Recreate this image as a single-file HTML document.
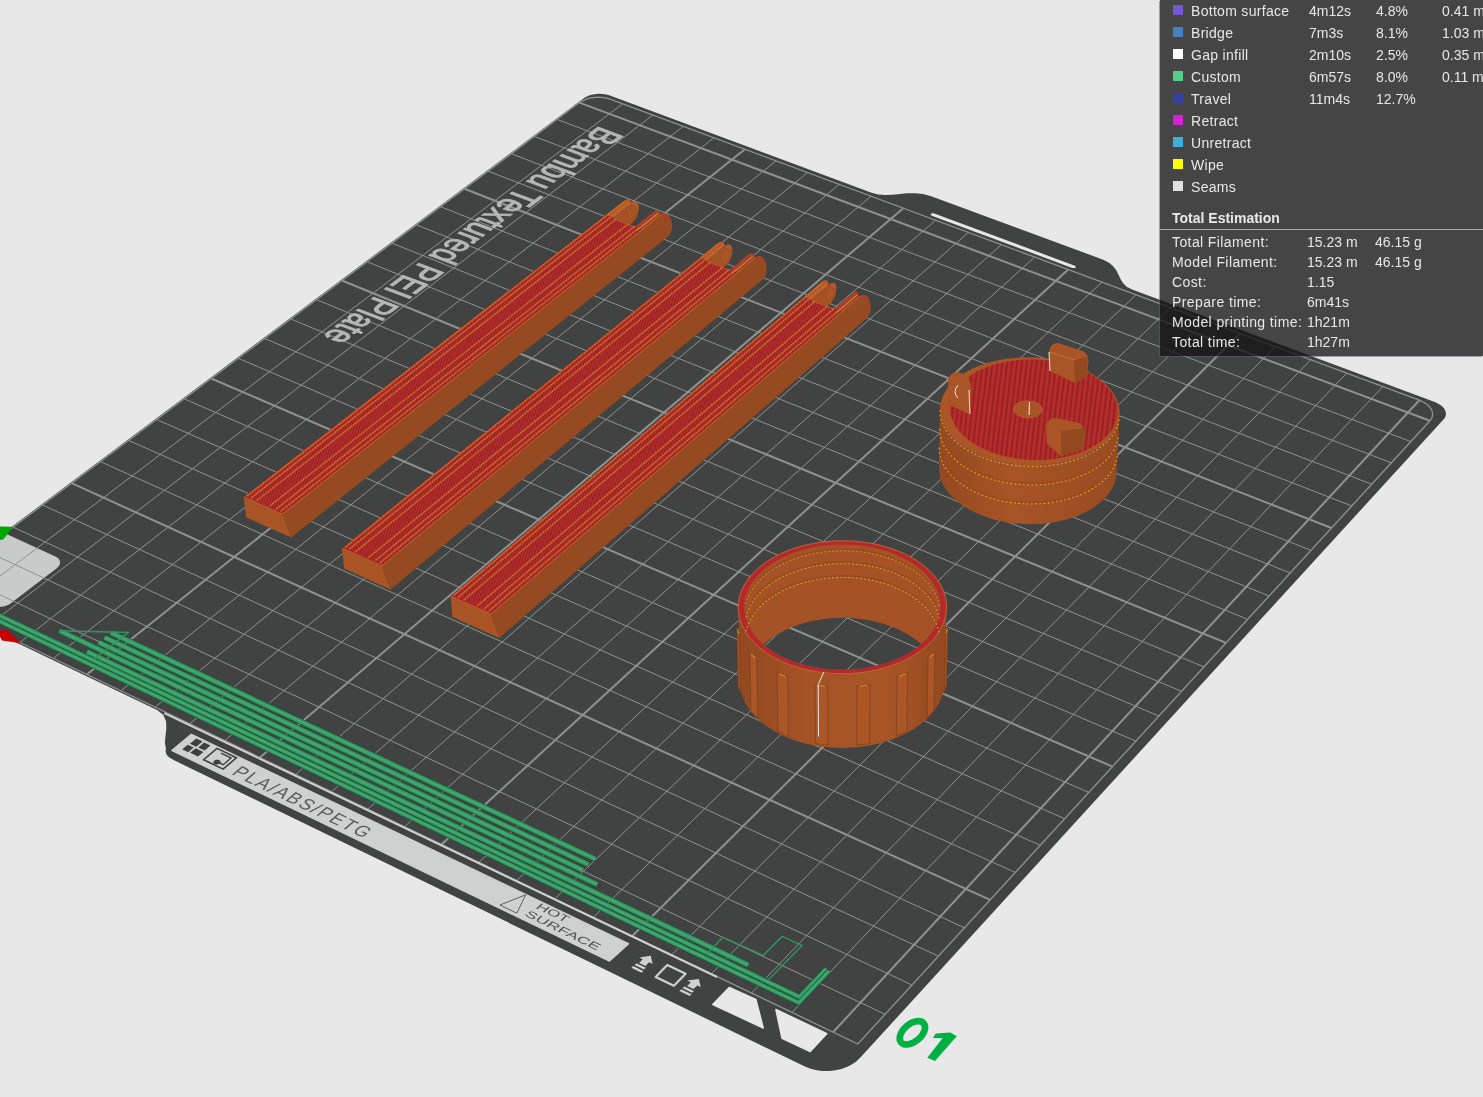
<!DOCTYPE html>
<html><head><meta charset="utf-8"><style>
html,body{margin:0;padding:0;width:1483px;height:1097px;overflow:hidden;background:#e8e8e8;font-family:"Liberation Sans",sans-serif}
svg{position:absolute;left:0;top:0;will-change:transform}
#lg{position:absolute;left:1160px;top:0;width:323px;height:356px;background:rgba(20,20,20,0.77);color:#e8e8e8;font-size:14px;box-shadow:-1px 1px 0 rgba(95,95,115,0.55);will-change:transform}
.row{position:absolute;left:0;height:22px;width:323px;line-height:22px}
.row i{position:absolute;left:13px;top:5px;width:10px;height:10px}
.row span,.row2 span{position:absolute;top:0;white-space:nowrap}
.n{left:31px;letter-spacing:0.3px}.t{left:149px}.p{left:216px}.d{left:282px}
.row2{position:absolute;left:0;height:20px;width:323px;line-height:20px}
.a{left:12px;letter-spacing:0.4px}.b{left:147px}.c{left:215px}
#te{position:absolute;left:12px;top:207px;font-weight:bold;line-height:22px}
#sep{position:absolute;left:0;top:229px;width:323px;height:1px;background:#a8a8a8}
</style></head><body>
<svg width="1483" height="1097" viewBox="0 0 1483 1097"><defs><clipPath id="cl1"><path d="M243.7 497.1 L282.3 514.3 L642.4 229.3 L605.7 215.0 Z"/></clipPath><clipPath id="cl2"><path d="M342.1 548.3 L381.7 566.0 L737.3 272.7 L699.5 258.0 Z"/></clipPath><clipPath id="cl3"><path d="M450.7 596.3 L490.8 614.2 L842.0 311.7 L804.0 296.9 Z"/></clipPath><linearGradient id="rgw" x1="0" x2="1" y1="0" y2="0"><stop offset="0" stop-color="#924820"/><stop offset="0.35" stop-color="#a55326"/><stop offset="0.7" stop-color="#a85526"/><stop offset="1" stop-color="#944920"/></linearGradient><clipPath id="ringclip"><path d="M924.6 640.9 L928.0 637.3 L930.9 633.7 L933.5 629.9 L935.7 626.0 L937.4 622.0 L938.8 618.0 L939.7 613.9 L940.2 609.9 L940.3 605.8 L940.0 601.7 L939.2 597.6 L938.1 593.6 L936.5 589.7 L934.6 585.8 L932.2 582.0 L929.5 578.4 L926.4 574.8 L923.0 571.4 L919.2 568.2 L915.1 565.1 L910.8 562.2 L906.1 559.5 L901.2 557.0 L896.0 554.7 L890.6 552.6 L885.0 550.7 L879.3 549.1 L873.4 547.7 L867.3 546.6 L861.2 545.7 L855.0 545.0 L848.7 544.7 L842.4 544.5 L836.1 544.7 L829.9 545.1 L823.7 545.7 L817.5 546.6 L811.5 547.8 L805.6 549.2 L799.8 550.8 L794.2 552.7 L788.8 554.8 L783.6 557.1 L778.7 559.6 L774.0 562.4 L769.6 565.3 L765.5 568.4 L761.8 571.6 L758.3 575.0 L755.2 578.6 L752.5 582.3 L750.1 586.1 L748.2 589.9 L746.6 593.9 L745.4 597.9 L744.7 602.0 L744.4 606.0 L744.4 610.1 L744.9 614.2 L745.9 618.3 L747.2 622.3 L749.0 626.3 L751.1 630.1 L753.7 633.9 L756.6 637.6 L760.0 641.1 L763.7 644.5 L767.7 647.8 L772.1 650.8 L776.8 653.7 L781.7 656.4 L787.0 658.8 L792.5 661.0 L798.2 663.0 L804.1 664.8 L810.2 666.2 L816.5 667.5 L822.8 668.4 L829.3 669.1 L835.8 669.5 L842.3 669.6 L848.8 669.5 L855.3 669.1 L861.8 668.4 L868.1 667.4 L874.4 666.1 L880.5 664.6 L886.4 662.9 L892.1 660.9 L897.6 658.6 L902.9 656.2 L907.8 653.5 L912.5 650.6 L916.9 647.5 L921.0 644.3 L924.6 640.9 Z"/></clipPath><clipPath id="ringclip2"><path d="M923.4 714.8 L926.7 711.2 L929.6 707.5 L932.2 703.7 L934.3 699.8 L936.0 695.8 L937.4 691.8 L938.3 687.7 L938.8 683.6 L938.9 679.4 L938.6 675.3 L937.8 671.2 L936.7 667.2 L935.2 663.2 L933.2 659.3 L930.9 655.5 L928.3 651.8 L925.2 648.3 L921.8 644.9 L918.1 641.6 L914.1 638.5 L909.8 635.6 L905.2 632.8 L900.3 630.3 L895.2 628.0 L889.9 625.9 L884.4 624.0 L878.8 622.4 L872.9 621.0 L867.0 619.8 L860.9 618.9 L854.8 618.3 L848.7 617.9 L842.5 617.8 L836.3 617.9 L830.1 618.3 L824.0 619.0 L817.9 619.9 L812.0 621.1 L806.1 622.5 L800.5 624.1 L795.0 626.0 L789.6 628.1 L784.5 630.5 L779.7 633.0 L775.1 635.8 L770.7 638.7 L766.7 641.8 L763.0 645.1 L759.6 648.5 L756.5 652.1 L753.9 655.8 L751.5 659.6 L749.6 663.5 L748.1 667.5 L746.9 671.6 L746.2 675.6 L745.9 679.8 L745.9 683.9 L746.4 688.0 L747.3 692.1 L748.7 696.1 L750.4 700.1 L752.5 704.0 L755.1 707.8 L758.0 711.5 L761.3 715.1 L764.9 718.5 L768.9 721.8 L773.2 724.9 L777.8 727.7 L782.7 730.4 L787.9 732.9 L793.3 735.1 L798.9 737.1 L804.8 738.9 L810.8 740.4 L816.9 741.6 L823.2 742.6 L829.5 743.2 L835.9 743.6 L842.3 743.8 L848.8 743.6 L855.2 743.2 L861.5 742.5 L867.8 741.5 L873.9 740.2 L879.9 738.7 L885.8 737.0 L891.4 734.9 L896.8 732.7 L902.0 730.2 L906.9 727.5 L911.5 724.6 L915.8 721.5 L919.8 718.2 L923.4 714.8 Z"/></clipPath><linearGradient id="cgw" x1="0" x2="1" y1="0" y2="0"><stop offset="0" stop-color="#944920"/><stop offset="0.4" stop-color="#a75426"/><stop offset="1" stop-color="#984b22"/></linearGradient><clipPath id="cl4"><path d="M1105.7 437.0 L1108.4 434.2 L1110.8 431.2 L1112.8 428.2 L1114.5 425.1 L1115.8 421.9 L1116.7 418.7 L1117.3 415.4 L1117.6 412.2 L1117.5 408.9 L1117.0 405.6 L1116.2 402.3 L1115.0 399.1 L1113.5 395.9 L1111.7 392.8 L1109.5 389.8 L1107.0 386.8 L1104.2 384.0 L1101.1 381.2 L1097.7 378.6 L1094.1 376.1 L1090.2 373.8 L1086.1 371.6 L1081.7 369.5 L1077.2 367.7 L1072.5 366.0 L1067.6 364.5 L1062.6 363.2 L1057.5 362.1 L1052.2 361.1 L1046.9 360.4 L1041.6 359.9 L1036.2 359.6 L1030.8 359.5 L1025.4 359.6 L1020.1 359.9 L1014.8 360.4 L1009.6 361.2 L1004.5 362.1 L999.5 363.2 L994.6 364.5 L989.9 366.0 L985.4 367.7 L981.1 369.6 L977.0 371.6 L973.2 373.8 L969.6 376.2 L966.2 378.7 L963.2 381.3 L960.4 384.0 L957.9 386.9 L955.8 389.9 L954.0 392.9 L952.5 396.0 L951.4 399.2 L950.6 402.4 L950.2 405.7 L950.1 409.0 L950.4 412.3 L951.0 415.6 L952.0 418.8 L953.4 422.0 L955.1 425.2 L957.2 428.3 L959.6 431.4 L962.3 434.3 L965.3 437.1 L968.6 439.9 L972.2 442.5 L976.1 444.9 L980.3 447.2 L984.7 449.3 L989.3 451.3 L994.1 453.1 L999.0 454.7 L1004.2 456.1 L1009.4 457.3 L1014.8 458.2 L1020.3 459.0 L1025.8 459.6 L1031.4 459.9 L1036.9 460.0 L1042.5 459.9 L1048.0 459.5 L1053.5 459.0 L1058.8 458.2 L1064.1 457.2 L1069.2 456.0 L1074.2 454.6 L1078.9 453.0 L1083.5 451.2 L1087.9 449.3 L1092.0 447.1 L1095.9 444.8 L1099.5 442.4 L1102.7 439.8 L1105.7 437.0 Z"/></clipPath></defs><path d="M-174.3 666.2 L-80.7 596.1 L157.1 710.1 L163.4 715.1 L166.1 721.4 L166.3 728.4 L165.5 735.7 L164.9 742.5 L165.9 748.2 L165.6 751.9 L166.8 755.0 L169.4 757.6 L173.7 760.1 L804.4 1066.3 L809.8 1068.5 L815.7 1070.0 L821.9 1070.9 L828.2 1071.1 L834.4 1070.5 L840.5 1069.3 L846.2 1067.3 L851.4 1064.8 L856.0 1061.7 L859.9 1058.1 L1443.7 419.2 L1445.0 417.5 L1445.7 415.7 L1446.0 413.8 L1445.7 411.9 L1445.0 409.9 L1443.8 408.1 L1442.1 406.3 L1440.0 404.7 L1437.5 403.3 L1434.8 402.1 L1132.1 289.6 L1126.7 286.8 L1123.1 283.2 L1120.6 279.2 L1118.6 274.9 L1116.4 270.6 L1113.4 266.5 L1109.1 262.7 L1102.7 259.5 L931.2 196.2 L931.2 196.2 L922.9 194.0 L914.9 193.2 L907.2 193.3 L899.7 194.0 L892.4 194.7 L885.2 194.9 L878.1 194.4 L870.9 192.5 L609.9 95.5 L607.4 94.7 L604.7 94.2 L601.9 93.9 L599.0 93.8 L596.1 94.0 L593.2 94.4 L590.5 95.1 L588.0 95.9 L585.8 97.0 L583.8 98.2 Z" fill="#414342"/>
<path d="M-174.3 666.2 L-79.1 594.9 L158.6 708.9" fill="none" stroke="#2c2e2d" stroke-width="1" opacity="0.6"/>
<path d="M56.7 568.2 L58.7 566.3 L59.8 564.2 L60.1 562.0 L59.5 560.0 L58.1 558.2 L55.9 556.8 L-4.7 528.7 L-9.0 527.5 L-14.1 527.5 L-19.1 528.7 L-23.2 530.9 L-69.1 565.0 L-71.8 568.0 L-72.8 571.2 L-71.6 574.2 L-68.7 576.4 L-7.8 605.4 L-4.9 606.4 L-1.6 606.8 L1.9 606.7 L5.3 606.0 L8.5 604.7 L11.2 603.1 Z" fill="#c9cbca"/>
<path d="M1072.3 267.9 L1073.5 268.1 L1074.7 268.0 L1075.6 267.5 L1075.9 266.9 L1075.6 266.2 L1074.8 265.7 L934.3 213.5 L933.1 213.3 L931.9 213.4 L931.1 213.8 L930.7 214.5 L930.9 215.1 L931.8 215.7 Z" fill="#e6e7e6"/>
<path d="M729.2 987.5 L755.9 999.5 L763.2 1028.0 L712.8 1004.5 Z M775.9 1009.5 L826.9 1033.6 L810.2 1051.6 L782.0 1038.3 Z" fill="#e8e8e8" stroke="#e8e8e8" stroke-width="1.5" stroke-linejoin="round"/>
<path d="M191.2 734.0 L629.1 943.7 L609.5 961.4 L171.4 750.5 Z" fill="#cfd1d0" stroke="#cfd1d0" stroke-width="1" stroke-linejoin="round"/>
<path d="M-45.8 610.9 L622.7 103.7 M-47.4 572.3 L885.1 1014.3 M-13.0 626.6 L652.9 115.0 M-17.0 549.5 L912.0 985.0 M20.0 642.4 L683.3 126.3 M13.0 527.1 L938.4 956.2 M53.3 658.4 L714.0 137.7 M42.5 505.0 L964.5 927.8 M120.9 690.8 L776.1 160.8 M100.3 461.6 L1015.3 872.4 M155.1 707.2 L807.5 172.5 M128.6 440.4 L1040.2 845.3 M189.7 723.8 L839.2 184.3 M156.6 419.5 L1064.7 818.7 M224.7 740.6 L871.1 196.2 M184.1 398.8 L1088.7 792.4 M295.6 774.5 L935.7 220.2 M238.1 358.3 L1135.9 741.1 M331.5 791.8 L968.5 232.4 M264.6 338.5 L1158.9 716.0 M367.8 809.2 L1001.4 244.7 M290.7 318.9 L1181.6 691.3 M404.5 826.8 L1034.7 257.1 M316.5 299.6 L1203.9 666.9 M478.9 862.4 L1102.0 282.1 M367.1 261.7 L1247.7 619.3 M516.7 880.5 L1136.1 294.8 M391.9 243.1 L1269.1 596.0 M554.8 898.8 L1170.4 307.6 M416.4 224.8 L1290.2 573.0 M593.4 917.3 L1205.1 320.5 M440.5 206.7 L1311.0 550.3 M671.6 954.8 L1275.3 346.6 M488.0 171.1 L1351.8 505.9 M711.3 973.9 L1310.8 359.8 M511.2 153.7 L1371.7 484.2 M751.5 993.1 L1346.7 373.2 M534.2 136.4 L1391.4 462.8 M792.0 1012.5 L1382.8 386.6 M557.0 119.4 L1410.8 441.6" fill="none" stroke="#8e938f" stroke-width="1.0"/><path d="M86.9 674.5 L744.9 149.2 M71.6 483.2 L990.1 899.9 M260.0 757.5 L903.3 208.2 M211.3 378.5 L1112.5 766.6 M441.5 844.5 L1068.2 269.5 M342.0 280.5 L1226.0 642.9 M632.3 936.0 L1240.0 333.5 M464.4 188.8 L1331.5 528.0 M833.0 1032.2 L1419.3 400.2 M579.4 102.6 L1429.9 420.8" fill="none" stroke="#8e938f" stroke-width="2"/><path d="M-173.3 666.7 L-78.2 595.4 L857.8 1044.0 L1429.9 420.8 L1431.7 418.2 L1432.6 415.4 L1432.5 412.5 L1431.5 409.6 L1429.6 406.8 L1426.8 404.2 L1423.3 402.0 L1419.3 400.2 L610.7 99.3 L606.9 98.2 L602.8 97.5 L598.4 97.2 L594.1 97.5 L589.8 98.2 L585.9 99.3 L582.3 100.8 L579.4 102.6 L-173.3 666.7" fill="none" stroke="#8e938f" stroke-width="1.3"/>
<path d="M164.3 713.2 L717.1 977.0" fill="none" stroke="#cdd0cf" stroke-width="2.0"/>
<text transform="matrix(-2.2353 1.6987 -3.0233 -1.1369 599.97 125.44)" font-family='"Liberation Sans",sans-serif' font-size="12.00" font-weight="normal" fill="#b5b7b6" textLength="124.5" lengthAdjust="spacingAndGlyphs" text-anchor="start" stroke="#b5b7b6" stroke-width="0.35">Bambu Textured PEI Plate</text>
<text transform="matrix(3.5471 1.7152 -3.0342 2.5842 230.65 773.94)" font-family='"Liberation Sans",sans-serif' font-size="4.80" font-weight="normal" fill="#5a5c5b" textLength="38.0" lengthAdjust="spacingAndGlyphs" text-anchor="start" letter-spacing="0.5">PLA/ABS/PETG</text>
<text transform="matrix(3.8341 1.8474 -2.9100 2.7871 534.90 908.02)" font-family='"Liberation Sans",sans-serif' font-size="2.70" font-weight="normal" fill="#505251" textLength="8.0" lengthAdjust="spacingAndGlyphs" text-anchor="start" >HOT</text>
<text transform="matrix(3.8364 1.8549 -2.9247 2.7985 523.85 915.29)" font-family='"Liberation Sans",sans-serif' font-size="2.70" font-weight="normal" fill="#505251" textLength="19.0" lengthAdjust="spacingAndGlyphs" text-anchor="start" >SURFACE</text>
<path d="M189.9 743.8 L196.2 746.8 L202.6 741.5 L196.3 738.5 Z" fill="#3e403f"/>
<path d="M198.3 747.4 L204.6 750.5 L210.4 745.6 L204.1 742.6 Z" fill="#3e403f"/>
<path d="M182.2 749.3 L188.2 752.2 L193.7 747.6 L187.7 744.7 Z" fill="#3e403f"/>
<path d="M190.2 752.8 L198.0 756.5 L203.4 751.9 L195.7 748.2 Z" fill="#3e403f"/>
<path d="M203.6 759.7 L223.1 769.1 L236.4 757.8 L217.0 748.4 Z" fill="none" stroke="#3e403f" stroke-width="1.6"/>
<path d="M220.9 753.1 L231.1 758.0 L223.2 764.7 L218.6 762.5" fill="none" stroke="#3e403f" stroke-width="1.4"/>
<path d="M219.7 763.4 L220.6 761.9 L220.1 760.5 L218.3 759.7 L216.0 759.7 L214.1 760.7 L213.2 762.1 L213.7 763.6 L215.5 764.4 L217.8 764.4 L219.7 763.4 Z" fill="#3e403f"/>
<path d="M525.7 894.8 L516.8 913.2 L500.0 905.0 Z" fill="none" stroke="#505251" stroke-width="0.9"/>
<path d="M650.8 955.8 L652.7 963.9 L649.1 962.2 L645.4 965.9 L639.1 962.9 L642.8 959.2 L639.2 957.4 Z" fill="#cfd1d0"/>
<path d="M636.3 963.3 L645.8 967.8 L644.1 969.6 L634.6 965.0 Z" fill="#cfd1d0"/>
<path d="M633.1 966.0 L643.3 970.9 L641.6 972.7 L631.3 967.7 Z" fill="#cfd1d0"/>
<path d="M698.8 978.9 L700.8 987.1 L697.2 985.4 L693.5 989.1 L687.1 986.1 L690.8 982.3 L687.2 980.5 Z" fill="#cfd1d0"/>
<path d="M684.3 986.4 L693.9 991.1 L692.2 992.8 L682.6 988.2 Z" fill="#cfd1d0"/>
<path d="M681.1 989.2 L691.5 994.2 L689.8 995.9 L679.4 990.9 Z" fill="#cfd1d0"/>
<path d="M655.6 976.9 L673.9 985.7 L685.6 973.8 L667.3 965.0 Z" fill="none" stroke="#cfd1d0" stroke-width="2.2" stroke-linejoin="round"/>
<path d="M110.9 632.8 L595.2 859.0" fill="none" stroke="#1d4a32" stroke-width="6.0" stroke-linecap="butt" stroke-linejoin="miter"/><path d="M110.9 632.8 L595.2 859.0" fill="none" stroke="#33935f" stroke-width="5.0" stroke-linecap="butt" stroke-linejoin="miter"/><path d="M110.9 632.8 L595.2 859.0" fill="none" stroke="#40a86f" stroke-width="2.2" stroke-linecap="butt"/><path d="M104.7 637.5 L588.3 864.5" fill="none" stroke="#1d4a32" stroke-width="6.0" stroke-linecap="butt" stroke-linejoin="miter"/><path d="M104.7 637.5 L588.3 864.5" fill="none" stroke="#33935f" stroke-width="5.0" stroke-linecap="butt" stroke-linejoin="miter"/><path d="M104.7 637.5 L588.3 864.5" fill="none" stroke="#40a86f" stroke-width="2.2" stroke-linecap="butt"/><path d="M98.7 642.3 L582.9 870.3" fill="none" stroke="#1d4a32" stroke-width="6.0" stroke-linecap="butt" stroke-linejoin="miter"/><path d="M98.7 642.3 L582.9 870.3" fill="none" stroke="#33935f" stroke-width="5.0" stroke-linecap="butt" stroke-linejoin="miter"/><path d="M98.7 642.3 L582.9 870.3" fill="none" stroke="#40a86f" stroke-width="2.2" stroke-linecap="butt"/><path d="M59.5 630.8 L597.2 884.6" fill="none" stroke="#1d4a32" stroke-width="6.0" stroke-linecap="butt" stroke-linejoin="miter"/><path d="M59.5 630.8 L597.2 884.6" fill="none" stroke="#33935f" stroke-width="5.0" stroke-linecap="butt" stroke-linejoin="miter"/><path d="M59.5 630.8 L597.2 884.6" fill="none" stroke="#40a86f" stroke-width="2.2" stroke-linecap="butt"/><path d="M87.0 651.7 L748.2 964.9" fill="none" stroke="#1d4a32" stroke-width="6.0" stroke-linecap="butt" stroke-linejoin="miter"/><path d="M87.0 651.7 L748.2 964.9" fill="none" stroke="#33935f" stroke-width="5.0" stroke-linecap="butt" stroke-linejoin="miter"/><path d="M87.0 651.7 L748.2 964.9" fill="none" stroke="#40a86f" stroke-width="2.2" stroke-linecap="butt"/><path d="M-96.5 569.8 L799.6 997.0 L826.3 968.8" fill="none" stroke="#1d4a32" stroke-width="5.4" stroke-linecap="butt" stroke-linejoin="miter"/><path d="M-96.5 569.8 L799.6 997.0 L826.3 968.8" fill="none" stroke="#33935f" stroke-width="4.4" stroke-linecap="butt" stroke-linejoin="miter"/><path d="M-96.5 569.8 L799.6 997.0 L826.3 968.8" fill="none" stroke="#40a86f" stroke-width="2.0" stroke-linecap="butt"/><path d="M-101.0 573.1 L798.9 1002.8 L829.0 970.9" fill="none" stroke="#1d4a32" stroke-width="5.2" stroke-linecap="butt" stroke-linejoin="miter"/><path d="M-101.0 573.1 L798.9 1002.8 L829.0 970.9" fill="none" stroke="#33935f" stroke-width="4.2" stroke-linecap="butt" stroke-linejoin="miter"/><path d="M-101.0 573.1 L798.9 1002.8 L829.0 970.9" fill="none" stroke="#40a86f" stroke-width="1.9" stroke-linecap="butt"/><path d="M59.5 630.8 L128.3 632.5 L94.0 659.0" fill="none" stroke="#33935f" stroke-width="1.4"/><path d="M707.4 953.4 L722.7 937.3 L763.3 955.3 L782.1 936.4 L802.0 945.4 L768.0 980.2" fill="none" stroke="#33935f" stroke-width="1.4"/>
<path d="M0 526.5 L13.2 526.8 L3.5 539.2 L0 540 Z" fill="#00a800"/>
<path d="M0 630.5 L7 629.8 L20.8 643.3 L2.2 640.6 L0 637 Z" fill="#c80000"/>
<path d="M613.8 237.3 L632.3 222.7 L632.3 222.7 L633.5 221.6 L634.7 220.3 L635.7 218.7 L636.7 217.0 L637.5 215.1 L638.1 213.2 L638.6 211.2 L638.8 209.4 L638.8 207.6 L638.7 206.0 L638.3 204.6 L637.7 203.5 L637.0 202.6 L636.1 202.1 L635.1 201.9 L633.9 202.0 L632.7 202.5 L631.5 203.3 L612.9 217.8 Z" fill="#a45225"/><path d="M634.3 211.2 L634.0 210.1 L633.4 209.4 L632.6 209.4 L631.6 210.0 L630.7 211.2 L630.0 212.6 L629.7 214.1 L629.8 215.5 L630.2 216.4 L630.9 216.8 L631.9 216.5 L632.8 215.6 L633.6 214.2 L634.1 212.7 L634.3 211.2 Z" fill="none" stroke="#c06a30" stroke-width="0.9" opacity="0.8"/><path d="M605.7 215.0 L612.9 217.8 L631.5 203.3 L633.3 202.2 L635.1 201.9 L636.6 202.3 L637.7 203.5 L638.5 205.3 L638.8 207.6 L631.6 204.8 L631.3 202.5 L630.5 200.7 L629.3 199.5 L627.8 199.1 L626.1 199.4 L624.3 200.5 Z" fill="#b5582a"/><path d="M243.7 497.1 L282.3 514.3 L642.4 229.3 L605.7 215.0 Z" fill="#b52d2d"/><g clip-path="url(#cl1)"><path d="M150.8 213.0L59.8 516.3M153.4 213.0L62.4 516.3M156.0 213.0L65.0 516.3M158.6 213.0L67.6 516.3M161.2 213.0L70.2 516.3M163.8 213.0L72.8 516.3M166.4 213.0L75.4 516.3M169.0 213.0L78.0 516.3M171.6 213.0L80.6 516.3M174.2 213.0L83.2 516.3M176.8 213.0L85.8 516.3M179.4 213.0L88.4 516.3M182.0 213.0L91.0 516.3M184.6 213.0L93.6 516.3M187.2 213.0L96.2 516.3M189.8 213.0L98.8 516.3M192.4 213.0L101.4 516.3M195.0 213.0L104.0 516.3M197.6 213.0L106.6 516.3M200.2 213.0L109.2 516.3M202.8 213.0L111.8 516.3M205.4 213.0L114.4 516.3M208.0 213.0L117.0 516.3M210.6 213.0L119.6 516.3M213.2 213.0L122.2 516.3M215.8 213.0L124.8 516.3M218.4 213.0L127.4 516.3M221.0 213.0L130.0 516.3M223.6 213.0L132.6 516.3M226.2 213.0L135.2 516.3M228.8 213.0L137.8 516.3M231.4 213.0L140.4 516.3M234.0 213.0L143.0 516.3M236.6 213.0L145.6 516.3M239.2 213.0L148.2 516.3M241.8 213.0L150.8 516.3M244.4 213.0L153.4 516.3M247.0 213.0L156.0 516.3M249.6 213.0L158.6 516.3M252.2 213.0L161.2 516.3M254.8 213.0L163.8 516.3M257.4 213.0L166.4 516.3M260.0 213.0L169.0 516.3M262.6 213.0L171.6 516.3M265.2 213.0L174.2 516.3M267.8 213.0L176.8 516.3M270.4 213.0L179.4 516.3M273.0 213.0L182.0 516.3M275.6 213.0L184.6 516.3M278.2 213.0L187.2 516.3M280.8 213.0L189.8 516.3M283.4 213.0L192.4 516.3M286.0 213.0L195.0 516.3M288.6 213.0L197.6 516.3M291.2 213.0L200.2 516.3M293.8 213.0L202.8 516.3M296.4 213.0L205.4 516.3M299.0 213.0L208.0 516.3M301.6 213.0L210.6 516.3M304.2 213.0L213.2 516.3M306.8 213.0L215.8 516.3M309.4 213.0L218.4 516.3M312.0 213.0L221.0 516.3M314.6 213.0L223.6 516.3M317.2 213.0L226.2 516.3M319.8 213.0L228.8 516.3M322.4 213.0L231.4 516.3M325.0 213.0L234.0 516.3M327.6 213.0L236.6 516.3M330.2 213.0L239.2 516.3M332.8 213.0L241.8 516.3M335.4 213.0L244.4 516.3M338.0 213.0L247.0 516.3M340.6 213.0L249.6 516.3M343.2 213.0L252.2 516.3M345.8 213.0L254.8 516.3M348.4 213.0L257.4 516.3M351.0 213.0L260.0 516.3M353.6 213.0L262.6 516.3M356.2 213.0L265.2 516.3M358.8 213.0L267.8 516.3M361.4 213.0L270.4 516.3M364.0 213.0L273.0 516.3M366.6 213.0L275.6 516.3M369.2 213.0L278.2 516.3M371.8 213.0L280.8 516.3M374.4 213.0L283.4 516.3M377.0 213.0L286.0 516.3M379.6 213.0L288.6 516.3M382.2 213.0L291.2 516.3M384.8 213.0L293.8 516.3M387.4 213.0L296.4 516.3M390.0 213.0L299.0 516.3M392.6 213.0L301.6 516.3M395.2 213.0L304.2 516.3M397.8 213.0L306.8 516.3M400.4 213.0L309.4 516.3M403.0 213.0L312.0 516.3M405.6 213.0L314.6 516.3M408.2 213.0L317.2 516.3M410.8 213.0L319.8 516.3M413.4 213.0L322.4 516.3M416.0 213.0L325.0 516.3M418.6 213.0L327.6 516.3M421.2 213.0L330.2 516.3M423.8 213.0L332.8 516.3M426.4 213.0L335.4 516.3M429.0 213.0L338.0 516.3M431.6 213.0L340.6 516.3M434.2 213.0L343.2 516.3M436.8 213.0L345.8 516.3M439.4 213.0L348.4 516.3M442.0 213.0L351.0 516.3M444.6 213.0L353.6 516.3M447.2 213.0L356.2 516.3M449.8 213.0L358.8 516.3M452.4 213.0L361.4 516.3M455.0 213.0L364.0 516.3M457.6 213.0L366.6 516.3M460.2 213.0L369.2 516.3M462.8 213.0L371.8 516.3M465.4 213.0L374.4 516.3M468.0 213.0L377.0 516.3M470.6 213.0L379.6 516.3M473.2 213.0L382.2 516.3M475.8 213.0L384.8 516.3M478.4 213.0L387.4 516.3M481.0 213.0L390.0 516.3M483.6 213.0L392.6 516.3M486.2 213.0L395.2 516.3M488.8 213.0L397.8 516.3M491.4 213.0L400.4 516.3M494.0 213.0L403.0 516.3M496.6 213.0L405.6 516.3M499.2 213.0L408.2 516.3M501.8 213.0L410.8 516.3M504.4 213.0L413.4 516.3M507.0 213.0L416.0 516.3M509.6 213.0L418.6 516.3M512.2 213.0L421.2 516.3M514.8 213.0L423.8 516.3M517.4 213.0L426.4 516.3M520.0 213.0L429.0 516.3M522.6 213.0L431.6 516.3M525.2 213.0L434.2 516.3M527.8 213.0L436.8 516.3M530.4 213.0L439.4 516.3M533.0 213.0L442.0 516.3M535.6 213.0L444.6 516.3M538.2 213.0L447.2 516.3M540.8 213.0L449.8 516.3M543.4 213.0L452.4 516.3M546.0 213.0L455.0 516.3M548.6 213.0L457.6 516.3M551.2 213.0L460.2 516.3M553.8 213.0L462.8 516.3M556.4 213.0L465.4 516.3M559.0 213.0L468.0 516.3M561.6 213.0L470.6 516.3M564.2 213.0L473.2 516.3M566.8 213.0L475.8 516.3M569.4 213.0L478.4 516.3M572.0 213.0L481.0 516.3M574.6 213.0L483.6 516.3M577.2 213.0L486.2 516.3M579.8 213.0L488.8 516.3M582.4 213.0L491.4 516.3M585.0 213.0L494.0 516.3M587.6 213.0L496.6 516.3M590.2 213.0L499.2 516.3M592.8 213.0L501.8 516.3M595.4 213.0L504.4 516.3M598.0 213.0L507.0 516.3M600.6 213.0L509.6 516.3M603.2 213.0L512.2 516.3M605.8 213.0L514.8 516.3M608.4 213.0L517.4 516.3M611.0 213.0L520.0 516.3M613.6 213.0L522.6 516.3M616.2 213.0L525.2 516.3M618.8 213.0L527.8 516.3M621.4 213.0L530.4 516.3M624.0 213.0L533.0 516.3M626.6 213.0L535.6 516.3M629.2 213.0L538.2 516.3M631.8 213.0L540.8 516.3M634.4 213.0L543.4 516.3M637.0 213.0L546.0 516.3M639.6 213.0L548.6 516.3M642.2 213.0L551.2 516.3M644.8 213.0L553.8 516.3M647.4 213.0L556.4 516.3M650.0 213.0L559.0 516.3M652.6 213.0L561.6 516.3M655.2 213.0L564.2 516.3M657.8 213.0L566.8 516.3M660.4 213.0L569.4 516.3M663.0 213.0L572.0 516.3M665.6 213.0L574.6 516.3M668.2 213.0L577.2 516.3M670.8 213.0L579.8 516.3M673.4 213.0L582.4 516.3M676.0 213.0L585.0 516.3M678.6 213.0L587.6 516.3M681.2 213.0L590.2 516.3M683.8 213.0L592.8 516.3M686.4 213.0L595.4 516.3M689.0 213.0L598.0 516.3M691.6 213.0L600.6 516.3M694.2 213.0L603.2 516.3M696.8 213.0L605.8 516.3M699.4 213.0L608.4 516.3M702.0 213.0L611.0 516.3M704.6 213.0L613.6 516.3M707.2 213.0L616.2 516.3M709.8 213.0L618.8 516.3M712.4 213.0L621.4 516.3M715.0 213.0L624.0 516.3M717.6 213.0L626.6 516.3M720.2 213.0L629.2 516.3M722.8 213.0L631.8 516.3M725.4 213.0L634.4 516.3M728.0 213.0L637.0 516.3M730.6 213.0L639.6 516.3M733.2 213.0L642.2 516.3" fill="none" stroke="#761819" stroke-width="0.90" opacity="0.60"/></g><path d="M246.3 496.6 L625.4 200.9 M250.5 498.4 L629.4 202.5 M256.3 501.0 L616.3 219.1 M269.0 506.6 L628.4 223.8 M275.5 509.6 L634.7 226.3 M280.2 511.6 L657.6 213.3" fill="none" stroke="#d8772e" stroke-width="1.3" opacity="0.95"/><path d="M246.3 496.6 L625.4 200.9 M250.5 498.4 L629.4 202.5 M256.3 501.0 L616.3 219.1 M269.0 506.6 L628.4 223.8 M275.5 509.6 L634.7 226.3 M280.2 511.6 L657.6 213.3" fill="none" stroke="#3a1208" stroke-width="1.0" opacity="0.5" stroke-dasharray="1 2.2"/><path d="M243.7 497.1 L282.3 514.3" fill="none" stroke="#d07030" stroke-width="1.0"/><path d="M635.1 227.1 L634.0 226.7 L631.0 225.5 L626.5 223.7 L621.6 221.8 L617.1 220.1 L614.1 218.9 L613.0 218.5" fill="none" stroke="#d08040" stroke-width="0.8" opacity="0.7"/><path d="M291.2 537.5 L668.0 236.5 L668.0 236.5 L669.1 235.4 L670.1 234.0 L670.9 232.3 L671.6 230.4 L672.0 228.4 L672.2 226.3 L672.1 224.2 L671.9 222.1 L671.4 220.1 L670.6 218.3 L669.7 216.7 L668.7 215.4 L667.5 214.4 L666.2 213.7 L664.9 213.4 L663.5 213.4 L662.2 213.8 L661.0 214.6 L282.3 514.3 Z" fill="#964a22"/><path d="M635.1 226.4 L642.4 229.3 L661.0 214.6 L662.9 213.6 L664.9 213.4 L666.9 214.0 L668.7 215.4 L670.2 217.5 L671.4 220.1 L660.9 216.1 L660.6 213.8 L659.8 212.0 L658.7 210.8 L657.2 210.4 L655.5 210.7 L653.7 211.8 Z" fill="#a8402a"/><path d="M637.2 230.0 L658.1 213.5" fill="none" stroke="#d8c030" stroke-width="1" opacity="0.8"/><path d="M282.3 514.3 L661.0 214.6" fill="none" stroke="#d07030" stroke-width="0.9" opacity="0.9"/><path d="M246.2 517.4 L291.2 537.5 L282.3 514.3 L243.7 497.1 Z" fill="#a85425"/>
<path d="M707.5 280.5 L725.8 265.5 L725.8 265.5 L727.0 264.4 L728.1 263.0 L729.2 261.4 L730.1 259.6 L731.0 257.7 L731.6 255.8 L732.1 253.8 L732.4 251.9 L732.4 250.2 L732.3 248.5 L731.9 247.2 L731.4 246.0 L730.7 245.2 L729.8 244.7 L728.8 244.5 L727.7 244.6 L726.6 245.1 L725.4 246.0 L707.0 260.9 Z" fill="#a45225"/><path d="M727.9 253.9 L727.7 252.7 L727.1 252.1 L726.3 252.1 L725.3 252.7 L724.5 253.9 L723.8 255.4 L723.4 256.9 L723.4 258.3 L723.9 259.2 L724.6 259.5 L725.5 259.2 L726.4 258.3 L727.2 256.9 L727.8 255.4 L727.9 253.9 Z" fill="none" stroke="#c06a30" stroke-width="0.9" opacity="0.8"/><path d="M699.5 258.0 L707.0 260.9 L725.4 246.0 L727.2 244.8 L728.8 244.5 L730.3 244.9 L731.4 246.0 L732.1 247.8 L732.4 250.2 L725.0 247.3 L724.7 245.0 L724.0 243.2 L722.9 242.0 L721.4 241.6 L719.7 242.0 L717.9 243.1 Z" fill="#b5582a"/><path d="M342.1 548.3 L381.7 566.0 L737.3 272.7 L699.5 258.0 Z" fill="#b52d2d"/><g clip-path="url(#cl2)"><path d="M246.5 256.0L152.9 568.0M249.1 256.0L155.5 568.0M251.7 256.0L158.1 568.0M254.3 256.0L160.7 568.0M256.9 256.0L163.3 568.0M259.5 256.0L165.9 568.0M262.1 256.0L168.5 568.0M264.7 256.0L171.1 568.0M267.3 256.0L173.7 568.0M269.9 256.0L176.3 568.0M272.5 256.0L178.9 568.0M275.1 256.0L181.5 568.0M277.7 256.0L184.1 568.0M280.3 256.0L186.7 568.0M282.9 256.0L189.3 568.0M285.5 256.0L191.9 568.0M288.1 256.0L194.5 568.0M290.7 256.0L197.1 568.0M293.3 256.0L199.7 568.0M295.9 256.0L202.3 568.0M298.5 256.0L204.9 568.0M301.1 256.0L207.5 568.0M303.7 256.0L210.1 568.0M306.3 256.0L212.7 568.0M308.9 256.0L215.3 568.0M311.5 256.0L217.9 568.0M314.1 256.0L220.5 568.0M316.7 256.0L223.1 568.0M319.3 256.0L225.7 568.0M321.9 256.0L228.3 568.0M324.5 256.0L230.9 568.0M327.1 256.0L233.5 568.0M329.7 256.0L236.1 568.0M332.3 256.0L238.7 568.0M334.9 256.0L241.3 568.0M337.5 256.0L243.9 568.0M340.1 256.0L246.5 568.0M342.7 256.0L249.1 568.0M345.3 256.0L251.7 568.0M347.9 256.0L254.3 568.0M350.5 256.0L256.9 568.0M353.1 256.0L259.5 568.0M355.7 256.0L262.1 568.0M358.3 256.0L264.7 568.0M360.9 256.0L267.3 568.0M363.5 256.0L269.9 568.0M366.1 256.0L272.5 568.0M368.7 256.0L275.1 568.0M371.3 256.0L277.7 568.0M373.9 256.0L280.3 568.0M376.5 256.0L282.9 568.0M379.1 256.0L285.5 568.0M381.7 256.0L288.1 568.0M384.3 256.0L290.7 568.0M386.9 256.0L293.3 568.0M389.5 256.0L295.9 568.0M392.1 256.0L298.5 568.0M394.7 256.0L301.1 568.0M397.3 256.0L303.7 568.0M399.9 256.0L306.3 568.0M402.5 256.0L308.9 568.0M405.1 256.0L311.5 568.0M407.7 256.0L314.1 568.0M410.3 256.0L316.7 568.0M412.9 256.0L319.3 568.0M415.5 256.0L321.9 568.0M418.1 256.0L324.5 568.0M420.7 256.0L327.1 568.0M423.3 256.0L329.7 568.0M425.9 256.0L332.3 568.0M428.5 256.0L334.9 568.0M431.1 256.0L337.5 568.0M433.7 256.0L340.1 568.0M436.3 256.0L342.7 568.0M438.9 256.0L345.3 568.0M441.5 256.0L347.9 568.0M444.1 256.0L350.5 568.0M446.7 256.0L353.1 568.0M449.3 256.0L355.7 568.0M451.9 256.0L358.3 568.0M454.5 256.0L360.9 568.0M457.1 256.0L363.5 568.0M459.7 256.0L366.1 568.0M462.3 256.0L368.7 568.0M464.9 256.0L371.3 568.0M467.5 256.0L373.9 568.0M470.1 256.0L376.5 568.0M472.7 256.0L379.1 568.0M475.3 256.0L381.7 568.0M477.9 256.0L384.3 568.0M480.5 256.0L386.9 568.0M483.1 256.0L389.5 568.0M485.7 256.0L392.1 568.0M488.3 256.0L394.7 568.0M490.9 256.0L397.3 568.0M493.5 256.0L399.9 568.0M496.1 256.0L402.5 568.0M498.7 256.0L405.1 568.0M501.3 256.0L407.7 568.0M503.9 256.0L410.3 568.0M506.5 256.0L412.9 568.0M509.1 256.0L415.5 568.0M511.7 256.0L418.1 568.0M514.3 256.0L420.7 568.0M516.9 256.0L423.3 568.0M519.5 256.0L425.9 568.0M522.1 256.0L428.5 568.0M524.7 256.0L431.1 568.0M527.3 256.0L433.7 568.0M529.9 256.0L436.3 568.0M532.5 256.0L438.9 568.0M535.1 256.0L441.5 568.0M537.7 256.0L444.1 568.0M540.3 256.0L446.7 568.0M542.9 256.0L449.3 568.0M545.5 256.0L451.9 568.0M548.1 256.0L454.5 568.0M550.7 256.0L457.1 568.0M553.3 256.0L459.7 568.0M555.9 256.0L462.3 568.0M558.5 256.0L464.9 568.0M561.1 256.0L467.5 568.0M563.7 256.0L470.1 568.0M566.3 256.0L472.7 568.0M568.9 256.0L475.3 568.0M571.5 256.0L477.9 568.0M574.1 256.0L480.5 568.0M576.7 256.0L483.1 568.0M579.3 256.0L485.7 568.0M581.9 256.0L488.3 568.0M584.5 256.0L490.9 568.0M587.1 256.0L493.5 568.0M589.7 256.0L496.1 568.0M592.3 256.0L498.7 568.0M594.9 256.0L501.3 568.0M597.5 256.0L503.9 568.0M600.1 256.0L506.5 568.0M602.7 256.0L509.1 568.0M605.3 256.0L511.7 568.0M607.9 256.0L514.3 568.0M610.5 256.0L516.9 568.0M613.1 256.0L519.5 568.0M615.7 256.0L522.1 568.0M618.3 256.0L524.7 568.0M620.9 256.0L527.3 568.0M623.5 256.0L529.9 568.0M626.1 256.0L532.5 568.0M628.7 256.0L535.1 568.0M631.3 256.0L537.7 568.0M633.9 256.0L540.3 568.0M636.5 256.0L542.9 568.0M639.1 256.0L545.5 568.0M641.7 256.0L548.1 568.0M644.3 256.0L550.7 568.0M646.9 256.0L553.3 568.0M649.5 256.0L555.9 568.0M652.1 256.0L558.5 568.0M654.7 256.0L561.1 568.0M657.3 256.0L563.7 568.0M659.9 256.0L566.3 568.0M662.5 256.0L568.9 568.0M665.1 256.0L571.5 568.0M667.7 256.0L574.1 568.0M670.3 256.0L576.7 568.0M672.9 256.0L579.3 568.0M675.5 256.0L581.9 568.0M678.1 256.0L584.5 568.0M680.7 256.0L587.1 568.0M683.3 256.0L589.7 568.0M685.9 256.0L592.3 568.0M688.5 256.0L594.9 568.0M691.1 256.0L597.5 568.0M693.7 256.0L600.1 568.0M696.3 256.0L602.7 568.0M698.9 256.0L605.3 568.0M701.5 256.0L607.9 568.0M704.1 256.0L610.5 568.0M706.7 256.0L613.1 568.0M709.3 256.0L615.7 568.0M711.9 256.0L618.3 568.0M714.5 256.0L620.9 568.0M717.1 256.0L623.5 568.0M719.7 256.0L626.1 568.0M722.3 256.0L628.7 568.0M724.9 256.0L631.3 568.0M727.5 256.0L633.9 568.0M730.1 256.0L636.5 568.0M732.7 256.0L639.1 568.0M735.3 256.0L641.7 568.0M737.9 256.0L644.3 568.0M740.5 256.0L646.9 568.0M743.1 256.0L649.5 568.0M745.7 256.0L652.1 568.0M748.3 256.0L654.7 568.0M750.9 256.0L657.3 568.0M753.5 256.0L659.9 568.0M756.1 256.0L662.5 568.0M758.7 256.0L665.1 568.0M761.3 256.0L667.7 568.0M763.9 256.0L670.3 568.0M766.5 256.0L672.9 568.0M769.1 256.0L675.5 568.0M771.7 256.0L678.1 568.0M774.3 256.0L680.7 568.0M776.9 256.0L683.3 568.0M779.5 256.0L685.9 568.0M782.1 256.0L688.5 568.0M784.7 256.0L691.1 568.0M787.3 256.0L693.7 568.0M789.9 256.0L696.3 568.0M792.5 256.0L698.9 568.0M795.1 256.0L701.5 568.0M797.7 256.0L704.1 568.0M800.3 256.0L706.7 568.0M802.9 256.0L709.3 568.0M805.5 256.0L711.9 568.0M808.1 256.0L714.5 568.0M810.7 256.0L717.1 568.0M813.3 256.0L719.7 568.0M815.9 256.0L722.3 568.0M818.5 256.0L724.9 568.0M821.1 256.0L727.5 568.0M823.7 256.0L730.1 568.0M826.3 256.0L732.7 568.0M828.9 256.0L735.3 568.0M831.5 256.0L737.9 568.0" fill="none" stroke="#761819" stroke-width="0.90" opacity="0.60"/></g><path d="M344.7 547.7 L719.1 243.5 M349.0 549.6 L723.2 245.1 M354.9 552.2 L710.4 262.3 M368.0 558.1 L722.9 267.1 M374.8 561.1 L729.3 269.6 M379.5 563.2 L752.2 256.3" fill="none" stroke="#d8772e" stroke-width="1.3" opacity="0.95"/><path d="M344.7 547.7 L719.1 243.5 M349.0 549.6 L723.2 245.1 M354.9 552.2 L710.4 262.3 M368.0 558.1 L722.9 267.1 M374.8 561.1 L729.3 269.6 M379.5 563.2 L752.2 256.3" fill="none" stroke="#3a1208" stroke-width="1.0" opacity="0.5" stroke-dasharray="1 2.2"/><path d="M342.1 548.3 L381.7 566.0" fill="none" stroke="#d07030" stroke-width="1.0"/><path d="M729.8 270.4 L728.7 270.0 L725.5 268.8 L720.9 267.0 L715.8 265.0 L711.3 263.2 L708.1 262.0 L707.0 261.6" fill="none" stroke="#d08040" stroke-width="0.8" opacity="0.7"/><path d="M390.5 589.4 L762.4 279.7 L762.4 279.7 L763.5 278.5 L764.5 277.1 L765.4 275.4 L766.0 273.5 L766.4 271.4 L766.6 269.3 L766.6 267.1 L766.3 265.0 L765.8 263.0 L765.1 261.2 L764.2 259.6 L763.2 258.3 L762.0 257.2 L760.8 256.6 L759.5 256.3 L758.1 256.3 L756.8 256.8 L755.6 257.6 L381.7 566.0 Z" fill="#964a22"/><path d="M729.8 269.8 L737.3 272.7 L755.6 257.6 L757.5 256.5 L759.5 256.3 L761.4 256.9 L763.2 258.3 L764.7 260.4 L765.8 263.0 L755.1 258.9 L754.8 256.6 L754.1 254.8 L753.0 253.6 L751.5 253.2 L749.9 253.6 L748.1 254.7 Z" fill="#a8402a"/><path d="M732.0 273.4 L752.7 256.5" fill="none" stroke="#d8c030" stroke-width="1" opacity="0.8"/><path d="M381.7 566.0 L755.6 257.6" fill="none" stroke="#d07030" stroke-width="0.9" opacity="0.9"/><path d="M344.1 568.6 L390.5 589.4 L381.7 566.0 L342.1 548.3 Z" fill="#a85425"/>
<path d="M811.7 319.5 L829.7 304.1 L829.7 304.1 L830.9 303.0 L832.0 301.6 L833.1 299.9 L834.0 298.2 L834.9 296.2 L835.5 294.3 L836.0 292.3 L836.3 290.4 L836.4 288.6 L836.3 287.0 L836.0 285.6 L835.5 284.5 L834.8 283.6 L834.0 283.1 L833.0 282.9 L832.0 283.1 L830.8 283.6 L829.7 284.5 L811.6 299.9 Z" fill="#a45225"/><path d="M832.0 292.4 L831.8 291.3 L831.3 290.6 L830.5 290.6 L829.5 291.3 L828.6 292.5 L827.9 294.0 L827.6 295.5 L827.6 296.9 L828.0 297.8 L828.7 298.1 L829.5 297.8 L830.5 296.9 L831.3 295.5 L831.8 293.9 L832.0 292.4 Z" fill="none" stroke="#c06a30" stroke-width="0.9" opacity="0.8"/><path d="M804.0 296.9 L811.6 299.9 L829.7 284.5 L831.4 283.3 L833.0 282.9 L834.4 283.3 L835.5 284.5 L836.2 286.3 L836.4 288.6 L828.8 285.7 L828.6 283.3 L827.9 281.5 L826.8 280.4 L825.4 280.0 L823.8 280.4 L822.0 281.6 Z" fill="#b5582a"/><path d="M450.7 596.3 L490.8 614.2 L842.0 311.7 L804.0 296.9 Z" fill="#b52d2d"/><g clip-path="url(#cl3)"><path d="M352.3 294.9L255.9 616.2M354.9 294.9L258.5 616.2M357.5 294.9L261.1 616.2M360.1 294.9L263.7 616.2M362.7 294.9L266.3 616.2M365.3 294.9L268.9 616.2M367.9 294.9L271.5 616.2M370.5 294.9L274.1 616.2M373.1 294.9L276.7 616.2M375.7 294.9L279.3 616.2M378.3 294.9L281.9 616.2M380.9 294.9L284.5 616.2M383.5 294.9L287.1 616.2M386.1 294.9L289.7 616.2M388.7 294.9L292.3 616.2M391.3 294.9L294.9 616.2M393.9 294.9L297.5 616.2M396.5 294.9L300.1 616.2M399.1 294.9L302.7 616.2M401.7 294.9L305.3 616.2M404.3 294.9L307.9 616.2M406.9 294.9L310.5 616.2M409.5 294.9L313.1 616.2M412.1 294.9L315.7 616.2M414.7 294.9L318.3 616.2M417.3 294.9L320.9 616.2M419.9 294.9L323.5 616.2M422.5 294.9L326.1 616.2M425.1 294.9L328.7 616.2M427.7 294.9L331.3 616.2M430.3 294.9L333.9 616.2M432.9 294.9L336.5 616.2M435.5 294.9L339.1 616.2M438.1 294.9L341.7 616.2M440.7 294.9L344.3 616.2M443.3 294.9L346.9 616.2M445.9 294.9L349.5 616.2M448.5 294.9L352.1 616.2M451.1 294.9L354.7 616.2M453.7 294.9L357.3 616.2M456.3 294.9L359.9 616.2M458.9 294.9L362.5 616.2M461.5 294.9L365.1 616.2M464.1 294.9L367.7 616.2M466.7 294.9L370.3 616.2M469.3 294.9L372.9 616.2M471.9 294.9L375.5 616.2M474.5 294.9L378.1 616.2M477.1 294.9L380.7 616.2M479.7 294.9L383.3 616.2M482.3 294.9L385.9 616.2M484.9 294.9L388.5 616.2M487.5 294.9L391.1 616.2M490.1 294.9L393.7 616.2M492.7 294.9L396.3 616.2M495.3 294.9L398.9 616.2M497.9 294.9L401.5 616.2M500.5 294.9L404.1 616.2M503.1 294.9L406.7 616.2M505.7 294.9L409.3 616.2M508.3 294.9L411.9 616.2M510.9 294.9L414.5 616.2M513.5 294.9L417.1 616.2M516.1 294.9L419.7 616.2M518.7 294.9L422.3 616.2M521.3 294.9L424.9 616.2M523.9 294.9L427.5 616.2M526.5 294.9L430.1 616.2M529.1 294.9L432.7 616.2M531.7 294.9L435.3 616.2M534.3 294.9L437.9 616.2M536.9 294.9L440.5 616.2M539.5 294.9L443.1 616.2M542.1 294.9L445.7 616.2M544.7 294.9L448.3 616.2M547.3 294.9L450.9 616.2M549.9 294.9L453.5 616.2M552.5 294.9L456.1 616.2M555.1 294.9L458.7 616.2M557.7 294.9L461.3 616.2M560.3 294.9L463.9 616.2M562.9 294.9L466.5 616.2M565.5 294.9L469.1 616.2M568.1 294.9L471.7 616.2M570.7 294.9L474.3 616.2M573.3 294.9L476.9 616.2M575.9 294.9L479.5 616.2M578.5 294.9L482.1 616.2M581.1 294.9L484.7 616.2M583.7 294.9L487.3 616.2M586.3 294.9L489.9 616.2M588.9 294.9L492.5 616.2M591.5 294.9L495.1 616.2M594.1 294.9L497.7 616.2M596.7 294.9L500.3 616.2M599.3 294.9L502.9 616.2M601.9 294.9L505.5 616.2M604.5 294.9L508.1 616.2M607.1 294.9L510.7 616.2M609.7 294.9L513.3 616.2M612.3 294.9L515.9 616.2M614.9 294.9L518.5 616.2M617.5 294.9L521.1 616.2M620.1 294.9L523.7 616.2M622.7 294.9L526.3 616.2M625.3 294.9L528.9 616.2M627.9 294.9L531.5 616.2M630.5 294.9L534.1 616.2M633.1 294.9L536.7 616.2M635.7 294.9L539.3 616.2M638.3 294.9L541.9 616.2M640.9 294.9L544.5 616.2M643.5 294.9L547.1 616.2M646.1 294.9L549.7 616.2M648.7 294.9L552.3 616.2M651.3 294.9L554.9 616.2M653.9 294.9L557.5 616.2M656.5 294.9L560.1 616.2M659.1 294.9L562.7 616.2M661.7 294.9L565.3 616.2M664.3 294.9L567.9 616.2M666.9 294.9L570.5 616.2M669.5 294.9L573.1 616.2M672.1 294.9L575.7 616.2M674.7 294.9L578.3 616.2M677.3 294.9L580.9 616.2M679.9 294.9L583.5 616.2M682.5 294.9L586.1 616.2M685.1 294.9L588.7 616.2M687.7 294.9L591.3 616.2M690.3 294.9L593.9 616.2M692.9 294.9L596.5 616.2M695.5 294.9L599.1 616.2M698.1 294.9L601.7 616.2M700.7 294.9L604.3 616.2M703.3 294.9L606.9 616.2M705.9 294.9L609.5 616.2M708.5 294.9L612.1 616.2M711.1 294.9L614.7 616.2M713.7 294.9L617.3 616.2M716.3 294.9L619.9 616.2M718.9 294.9L622.5 616.2M721.5 294.9L625.1 616.2M724.1 294.9L627.7 616.2M726.7 294.9L630.3 616.2M729.3 294.9L632.9 616.2M731.9 294.9L635.5 616.2M734.5 294.9L638.1 616.2M737.1 294.9L640.7 616.2M739.7 294.9L643.3 616.2M742.3 294.9L645.9 616.2M744.9 294.9L648.5 616.2M747.5 294.9L651.1 616.2M750.1 294.9L653.7 616.2M752.7 294.9L656.3 616.2M755.3 294.9L658.9 616.2M757.9 294.9L661.5 616.2M760.5 294.9L664.1 616.2M763.1 294.9L666.7 616.2M765.7 294.9L669.3 616.2M768.3 294.9L671.9 616.2M770.9 294.9L674.5 616.2M773.5 294.9L677.1 616.2M776.1 294.9L679.7 616.2M778.7 294.9L682.3 616.2M781.3 294.9L684.9 616.2M783.9 294.9L687.5 616.2M786.5 294.9L690.1 616.2M789.1 294.9L692.7 616.2M791.7 294.9L695.3 616.2M794.3 294.9L697.9 616.2M796.9 294.9L700.5 616.2M799.5 294.9L703.1 616.2M802.1 294.9L705.7 616.2M804.7 294.9L708.3 616.2M807.3 294.9L710.9 616.2M809.9 294.9L713.5 616.2M812.5 294.9L716.1 616.2M815.1 294.9L718.7 616.2M817.7 294.9L721.3 616.2M820.3 294.9L723.9 616.2M822.9 294.9L726.5 616.2M825.5 294.9L729.1 616.2M828.1 294.9L731.7 616.2M830.7 294.9L734.3 616.2M833.3 294.9L736.9 616.2M835.9 294.9L739.5 616.2M838.5 294.9L742.1 616.2M841.1 294.9L744.7 616.2M843.7 294.9L747.3 616.2M846.3 294.9L749.9 616.2M848.9 294.9L752.5 616.2M851.5 294.9L755.1 616.2M854.1 294.9L757.7 616.2M856.7 294.9L760.3 616.2M859.3 294.9L762.9 616.2M861.9 294.9L765.5 616.2M864.5 294.9L768.1 616.2M867.1 294.9L770.7 616.2M869.7 294.9L773.3 616.2M872.3 294.9L775.9 616.2M874.9 294.9L778.5 616.2M877.5 294.9L781.1 616.2M880.1 294.9L783.7 616.2M882.7 294.9L786.3 616.2M885.3 294.9L788.9 616.2M887.9 294.9L791.5 616.2M890.5 294.9L794.1 616.2M893.1 294.9L796.7 616.2M895.7 294.9L799.3 616.2M898.3 294.9L801.9 616.2M900.9 294.9L804.5 616.2M903.5 294.9L807.1 616.2M906.1 294.9L809.7 616.2M908.7 294.9L812.3 616.2M911.3 294.9L814.9 616.2M913.9 294.9L817.5 616.2M916.5 294.9L820.1 616.2M919.1 294.9L822.7 616.2M921.7 294.9L825.3 616.2M924.3 294.9L827.9 616.2M926.9 294.9L830.5 616.2M929.5 294.9L833.1 616.2M932.1 294.9L835.7 616.2M934.7 294.9L838.3 616.2M937.3 294.9L840.9 616.2M939.9 294.9L843.5 616.2" fill="none" stroke="#761819" stroke-width="0.90" opacity="0.60"/></g><path d="M453.3 595.7 L823.2 282.0 M457.6 597.7 L827.3 283.6 M463.6 600.3 L815.0 301.2 M476.9 606.2 L827.5 306.0 M483.7 609.3 L834.0 308.6 M488.5 611.4 L856.6 294.9" fill="none" stroke="#d8772e" stroke-width="1.3" opacity="0.95"/><path d="M453.3 595.7 L823.2 282.0 M457.6 597.7 L827.3 283.6 M463.6 600.3 L815.0 301.2 M476.9 606.2 L827.5 306.0 M483.7 609.3 L834.0 308.6 M488.5 611.4 L856.6 294.9" fill="none" stroke="#3a1208" stroke-width="1.0" opacity="0.5" stroke-dasharray="1 2.2"/><path d="M450.7 596.3 L490.8 614.2" fill="none" stroke="#d07030" stroke-width="1.0"/><path d="M834.3 309.3 L833.2 308.9 L830.0 307.7 L825.5 305.9 L820.4 303.9 L815.9 302.2 L812.7 301.0 L811.6 300.5" fill="none" stroke="#d08040" stroke-width="0.8" opacity="0.7"/><path d="M499.3 637.9 L866.6 318.4 L866.6 318.4 L867.7 317.3 L868.7 315.8 L869.5 314.1 L870.1 312.1 L870.6 310.0 L870.8 307.9 L870.7 305.7 L870.5 303.6 L870.0 301.5 L869.3 299.7 L868.5 298.1 L867.5 296.8 L866.3 295.7 L865.1 295.1 L863.8 294.8 L862.5 294.9 L861.2 295.3 L860.0 296.2 L490.8 614.2 Z" fill="#964a22"/><path d="M834.3 308.7 L842.0 311.7 L860.0 296.2 L861.9 295.1 L863.8 294.8 L865.7 295.4 L867.5 296.8 L868.9 298.9 L870.0 301.5 L859.0 297.3 L858.8 295.0 L858.1 293.2 L857.1 292.0 L855.7 291.7 L854.1 292.1 L852.3 293.2 Z" fill="#a8402a"/><path d="M836.8 312.4 L857.0 295.0" fill="none" stroke="#d8c030" stroke-width="1" opacity="0.8"/><path d="M490.8 614.2 L860.0 296.2" fill="none" stroke="#d07030" stroke-width="0.9" opacity="0.9"/><path d="M452.3 616.8 L499.3 637.9 L490.8 614.2 L450.7 596.3 Z" fill="#a85425"/>
<path d="M940.1 407.3 L940.1 410.1 L940.2 412.9 L940.7 415.8 L941.4 418.6 L942.3 421.4 L943.4 424.1 L944.8 426.9 L946.5 429.6 L948.4 432.2 L950.5 434.8 L952.8 437.3 L955.3 439.8 L958.1 442.2 L961.0 444.4 L964.2 446.6 L967.5 448.8 L971.0 450.7 L974.7 452.6 L978.6 454.4 L982.5 456.1 L986.7 457.6 L990.9 459.0 L995.3 460.3 L999.7 461.4 L1004.3 462.4 L1008.9 463.2 L1013.6 463.9 L1018.3 464.4 L1023.0 464.8 L1027.8 465.1 L1032.6 465.1 L1037.4 465.1 L1042.1 464.9 L1046.8 464.5 L1051.5 464.0 L1056.1 463.3 L1060.6 462.5 L1065.1 461.5 L1069.4 460.4 L1073.6 459.2 L1077.7 457.8 L1081.7 456.3 L1085.5 454.7 L1089.2 452.9 L1092.7 451.0 L1096.0 449.0 L1099.1 447.0 L1102.0 444.8 L1104.7 442.5 L1107.2 440.1 L1109.5 437.7 L1111.6 435.2 L1113.4 432.6 L1115.0 430.0 L1116.4 427.3 L1117.5 424.5 L1118.4 421.8 L1119.0 419.0 L1119.4 416.2 L1119.6 413.4 L1116.4 472.0 L1116.3 474.8 L1115.9 477.7 L1115.3 480.5 L1114.4 483.3 L1113.3 486.0 L1111.9 488.7 L1110.3 491.4 L1108.5 494.0 L1106.5 496.5 L1104.2 498.9 L1101.7 501.3 L1099.0 503.6 L1096.1 505.8 L1093.1 507.9 L1089.8 509.9 L1086.3 511.8 L1082.7 513.6 L1079.0 515.2 L1075.0 516.8 L1071.0 518.1 L1066.8 519.4 L1062.5 520.5 L1058.1 521.5 L1053.6 522.3 L1049.1 523.0 L1044.5 523.5 L1039.8 523.9 L1035.1 524.1 L1030.4 524.2 L1025.7 524.1 L1021.0 523.8 L1016.3 523.4 L1011.6 522.9 L1007.0 522.2 L1002.4 521.4 L997.9 520.4 L993.5 519.2 L989.2 518.0 L985.0 516.6 L980.9 515.0 L977.0 513.4 L973.2 511.6 L969.6 509.7 L966.1 507.7 L962.8 505.5 L959.7 503.3 L956.8 501.0 L954.1 498.6 L951.5 496.2 L949.2 493.6 L947.2 491.0 L945.3 488.3 L943.7 485.6 L942.3 482.9 L941.2 480.1 L940.2 477.3 L939.6 474.5 L939.1 471.6 L939.0 468.8 L939.0 465.9 Z" fill="url(#cgw)"/><path d="M939.7 427.2 L939.8 430.0 L940.1 432.7 L940.7 435.5 L941.5 438.2 L942.5 440.9 L943.8 443.6 L945.3 446.3 L947.0 448.9 L948.9 451.5 L951.1 454.0 L953.4 456.4 L956.0 458.8 L958.8 461.1 L961.7 463.3 L964.9 465.4 L968.2 467.5 L971.6 469.4 L975.3 471.2 L979.0 472.9 L983.0 474.5 L987.0 476.0 L991.1 477.3 L995.4 478.6 L999.8 479.6 L1004.2 480.6 L1008.7 481.4 L1013.3 482.1 L1017.9 482.6 L1022.5 483.0 L1027.2 483.2 L1031.8 483.3 L1036.5 483.2 L1041.1 483.0 L1045.7 482.7 L1050.2 482.2 L1054.7 481.5 L1059.2 480.7 L1063.5 479.8 L1067.8 478.8 L1071.9 477.6 L1075.9 476.2 L1079.8 474.8 L1083.6 473.2 L1087.2 471.5 L1090.6 469.7 L1093.9 467.8 L1097.0 465.8 L1099.9 463.7 L1102.7 461.5 L1105.2 459.2 L1107.5 456.9 L1109.7 454.5 L1111.6 452.0 L1113.2 449.4 L1114.7 446.8 L1115.9 444.2 L1116.9 441.5 L1117.7 438.7 L1118.2 436.0 L1118.5 433.3" fill="none" stroke="#9a4714" stroke-width="1.8" opacity="0.55"/><path d="M939.7 428.9 L939.8 431.6 L940.1 434.4 L940.7 437.2 L941.5 439.9 L942.5 442.6 L943.8 445.3 L945.3 448.0 L947.0 450.6 L948.9 453.2 L951.1 455.7 L953.4 458.1 L956.0 460.5 L958.7 462.8 L961.7 465.0 L964.8 467.1 L968.1 469.2 L971.6 471.1 L975.2 472.9 L979.0 474.6 L982.9 476.2 L986.9 477.7 L991.1 479.0 L995.4 480.3 L999.7 481.3 L1004.1 482.3 L1008.6 483.1 L1013.2 483.8 L1017.8 484.3 L1022.4 484.7 L1027.1 484.9 L1031.7 485.0 L1036.4 484.9 L1041.0 484.7 L1045.6 484.4 L1050.2 483.9 L1054.7 483.2 L1059.1 482.4 L1063.4 481.5 L1067.7 480.5 L1071.8 479.3 L1075.8 477.9 L1079.7 476.5 L1083.5 474.9 L1087.1 473.2 L1090.6 471.4 L1093.8 469.5 L1096.9 467.5 L1099.9 465.4 L1102.6 463.2 L1105.1 460.9 L1107.5 458.6 L1109.6 456.2 L1111.5 453.7 L1113.2 451.1 L1114.6 448.5 L1115.8 445.8 L1116.8 443.2 L1117.6 440.4 L1118.1 437.7 L1118.4 434.9" fill="none" stroke="#dcb235" stroke-width="1.1" stroke-dasharray="1.6 2.6"/><path d="M939.4 446.1 L939.5 448.8 L939.8 451.6 L940.4 454.4 L941.2 457.1 L942.2 459.9 L943.4 462.6 L944.9 465.2 L946.6 467.9 L948.6 470.4 L950.7 472.9 L953.0 475.4 L955.6 477.8 L958.3 480.1 L961.3 482.3 L964.4 484.4 L967.7 486.5 L971.2 488.4 L974.8 490.2 L978.5 491.9 L982.4 493.5 L986.5 495.0 L990.6 496.3 L994.8 497.6 L999.2 498.6 L1003.6 499.6 L1008.1 500.4 L1012.6 501.1 L1017.2 501.6 L1021.8 502.0 L1026.5 502.2 L1031.1 502.3 L1035.7 502.2 L1040.4 502.0 L1044.9 501.7 L1049.5 501.2 L1054.0 500.5 L1058.4 499.7 L1062.7 498.8 L1066.9 497.8 L1071.0 496.6 L1075.1 495.2 L1078.9 493.8 L1082.7 492.2 L1086.3 490.5 L1089.7 488.7 L1093.0 486.8 L1096.1 484.8 L1099.0 482.7 L1101.7 480.5 L1104.2 478.2 L1106.6 475.8 L1108.7 473.4 L1110.6 470.9 L1112.2 468.3 L1113.7 465.7 L1114.9 463.1 L1115.9 460.4 L1116.7 457.6 L1117.2 454.9 L1117.5 452.1" fill="none" stroke="#9a4714" stroke-width="1.8" opacity="0.55"/><path d="M939.3 447.8 L939.4 450.5 L939.8 453.3 L940.3 456.1 L941.1 458.8 L942.2 461.5 L943.4 464.2 L944.9 466.9 L946.6 469.5 L948.5 472.1 L950.7 474.6 L953.0 477.1 L955.6 479.5 L958.3 481.8 L961.2 484.0 L964.4 486.1 L967.7 488.1 L971.1 490.1 L974.7 491.9 L978.5 493.6 L982.4 495.2 L986.4 496.7 L990.6 498.0 L994.8 499.2 L999.1 500.3 L1003.5 501.3 L1008.0 502.1 L1012.6 502.7 L1017.2 503.3 L1021.8 503.7 L1026.4 503.9 L1031.0 504.0 L1035.7 503.9 L1040.3 503.7 L1044.9 503.4 L1049.4 502.9 L1053.9 502.2 L1058.3 501.4 L1062.6 500.5 L1066.8 499.4 L1071.0 498.3 L1075.0 496.9 L1078.9 495.5 L1082.6 493.9 L1086.2 492.2 L1089.6 490.4 L1092.9 488.5 L1096.0 486.5 L1098.9 484.4 L1101.6 482.2 L1104.2 479.9 L1106.5 477.5 L1108.6 475.1 L1110.5 472.6 L1112.2 470.0 L1113.6 467.4 L1114.8 464.7 L1115.8 462.1 L1116.6 459.3 L1117.1 456.6 L1117.4 453.8" fill="none" stroke="#dcb235" stroke-width="1.1" stroke-dasharray="1.6 2.6"/><path d="M1106.9 440.5 L1109.7 437.4 L1112.2 434.3 L1114.4 431.0 L1116.2 427.7 L1117.6 424.3 L1118.6 420.8 L1119.3 417.3 L1119.6 413.8 L1119.4 410.3 L1118.9 406.8 L1118.0 403.3 L1116.8 399.8 L1115.2 396.4 L1113.2 393.1 L1110.8 389.8 L1108.2 386.7 L1105.2 383.6 L1101.8 380.7 L1098.2 377.9 L1094.3 375.2 L1090.2 372.7 L1085.8 370.3 L1081.1 368.2 L1076.3 366.2 L1071.2 364.4 L1066.0 362.8 L1060.6 361.4 L1055.1 360.2 L1049.6 359.2 L1043.9 358.4 L1038.2 357.8 L1032.4 357.5 L1026.6 357.4 L1020.9 357.5 L1015.1 357.9 L1009.5 358.4 L1003.9 359.2 L998.4 360.2 L993.1 361.4 L987.9 362.8 L982.9 364.4 L978.0 366.2 L973.4 368.2 L969.0 370.4 L964.9 372.8 L961.0 375.3 L957.4 377.9 L954.1 380.7 L951.2 383.7 L948.5 386.7 L946.2 389.9 L944.3 393.2 L942.7 396.5 L941.5 399.9 L940.6 403.4 L940.1 406.9 L940.1 410.4 L940.4 413.9 L941.0 417.4 L942.1 420.9 L943.6 424.4 L945.4 427.8 L947.6 431.1 L950.1 434.4 L953.0 437.6 L956.3 440.6 L959.8 443.5 L963.7 446.3 L967.9 448.9 L972.3 451.4 L977.0 453.7 L981.9 455.8 L987.1 457.7 L992.4 459.4 L997.9 460.9 L1003.6 462.2 L1009.3 463.3 L1015.2 464.1 L1021.1 464.7 L1027.1 465.0 L1033.0 465.1 L1039.0 465.0 L1044.9 464.7 L1050.8 464.1 L1056.5 463.2 L1062.2 462.2 L1067.7 460.9 L1073.0 459.4 L1078.1 457.7 L1083.0 455.7 L1087.7 453.6 L1092.1 451.3 L1096.3 448.8 L1100.1 446.2 L1103.6 443.4 L1106.9 440.5 Z" fill="#ac5627"/><path d="M940.0 410.5 L940.1 413.3 L940.5 416.1 L941.0 418.8 L941.8 421.6 L942.9 424.3 L944.1 427.0 L945.6 429.6 L947.3 432.2 L949.3 434.8 L951.4 437.3 L953.8 439.7 L956.4 442.1 L959.1 444.4 L962.1 446.6 L965.2 448.7 L968.6 450.8 L972.1 452.7 L975.7 454.5 L979.5 456.2 L983.4 457.8 L987.5 459.3 L991.6 460.6 L995.9 461.8 L1000.3 462.9 L1004.7 463.8 L1009.2 464.6 L1013.8 465.3 L1018.4 465.8 L1023.1 466.2 L1027.8 466.4 L1032.4 466.5 L1037.1 466.5 L1041.7 466.3 L1046.4 465.9 L1050.9 465.4 L1055.4 464.8 L1059.9 464.0 L1064.2 463.1 L1068.5 462.0 L1072.6 460.8 L1076.7 459.5 L1080.6 458.1 L1084.4 456.5 L1088.0 454.8 L1091.4 453.0 L1094.7 451.1 L1097.9 449.1 L1100.8 447.0 L1103.5 444.8 L1106.1 442.6 L1108.4 440.2 L1110.5 437.8 L1112.4 435.3 L1114.1 432.7 L1115.6 430.1 L1116.8 427.5 L1117.8 424.8 L1118.6 422.1 L1119.1 419.4 L1119.4 416.6" fill="none" stroke="#dcb235" stroke-width="1.1" stroke-dasharray="1.6 2.6"/><path d="M1105.7 437.0 L1108.4 434.2 L1110.8 431.2 L1112.8 428.2 L1114.5 425.1 L1115.8 421.9 L1116.7 418.7 L1117.3 415.4 L1117.6 412.2 L1117.5 408.9 L1117.0 405.6 L1116.2 402.3 L1115.0 399.1 L1113.5 395.9 L1111.7 392.8 L1109.5 389.8 L1107.0 386.8 L1104.2 384.0 L1101.1 381.2 L1097.7 378.6 L1094.1 376.1 L1090.2 373.8 L1086.1 371.6 L1081.7 369.5 L1077.2 367.7 L1072.5 366.0 L1067.6 364.5 L1062.6 363.2 L1057.5 362.1 L1052.2 361.1 L1046.9 360.4 L1041.6 359.9 L1036.2 359.6 L1030.8 359.5 L1025.4 359.6 L1020.1 359.9 L1014.8 360.4 L1009.6 361.2 L1004.5 362.1 L999.5 363.2 L994.6 364.5 L989.9 366.0 L985.4 367.7 L981.1 369.6 L977.0 371.6 L973.2 373.8 L969.6 376.2 L966.2 378.7 L963.2 381.3 L960.4 384.0 L957.9 386.9 L955.8 389.9 L954.0 392.9 L952.5 396.0 L951.4 399.2 L950.6 402.4 L950.2 405.7 L950.1 409.0 L950.4 412.3 L951.0 415.6 L952.0 418.8 L953.4 422.0 L955.1 425.2 L957.2 428.3 L959.6 431.4 L962.3 434.3 L965.3 437.1 L968.6 439.9 L972.2 442.5 L976.1 444.9 L980.3 447.2 L984.7 449.3 L989.3 451.3 L994.1 453.1 L999.0 454.7 L1004.2 456.1 L1009.4 457.3 L1014.8 458.2 L1020.3 459.0 L1025.8 459.6 L1031.4 459.9 L1036.9 460.0 L1042.5 459.9 L1048.0 459.5 L1053.5 459.0 L1058.8 458.2 L1064.1 457.2 L1069.2 456.0 L1074.2 454.6 L1078.9 453.0 L1083.5 451.2 L1087.9 449.3 L1092.0 447.1 L1095.9 444.8 L1099.5 442.4 L1102.7 439.8 L1105.7 437.0 Z" fill="#b52d2d"/><g clip-path="url(#cl4)"><path d="M920.6 350.0L906.2 470.0M925.5 350.0L911.1 470.0M930.4 350.0L916.0 470.0M935.3 350.0L920.9 470.0M940.2 350.0L925.8 470.0M945.1 350.0L930.7 470.0M950.0 350.0L935.6 470.0M954.9 350.0L940.5 470.0M959.8 350.0L945.4 470.0M964.7 350.0L950.3 470.0M969.6 350.0L955.2 470.0M974.5 350.0L960.1 470.0M979.4 350.0L965.0 470.0M984.3 350.0L969.9 470.0M989.2 350.0L974.8 470.0M994.1 350.0L979.7 470.0M999.0 350.0L984.6 470.0M1003.9 350.0L989.5 470.0M1008.8 350.0L994.4 470.0M1013.7 350.0L999.3 470.0M1018.6 350.0L1004.2 470.0M1023.5 350.0L1009.1 470.0M1028.4 350.0L1014.0 470.0M1033.3 350.0L1018.9 470.0M1038.2 350.0L1023.8 470.0M1043.1 350.0L1028.7 470.0M1048.0 350.0L1033.6 470.0M1052.9 350.0L1038.5 470.0M1057.8 350.0L1043.4 470.0M1062.7 350.0L1048.3 470.0M1067.6 350.0L1053.2 470.0M1072.5 350.0L1058.1 470.0M1077.4 350.0L1063.0 470.0M1082.3 350.0L1067.9 470.0M1087.2 350.0L1072.8 470.0M1092.1 350.0L1077.7 470.0M1097.0 350.0L1082.6 470.0M1101.9 350.0L1087.5 470.0M1106.8 350.0L1092.4 470.0M1111.7 350.0L1097.3 470.0M1116.6 350.0L1102.2 470.0M1121.5 350.0L1107.1 470.0M1126.4 350.0L1112.0 470.0M1131.3 350.0L1116.9 470.0M1136.2 350.0L1121.8 470.0" fill="none" stroke="#7e1a1a" stroke-width="2.00" opacity="0.55"/></g><path d="M1039.8 414.0 L1040.2 413.5 L1040.6 413.0 L1041.0 412.5 L1041.3 412.0 L1041.5 411.4 L1041.7 410.9 L1041.8 410.4 L1041.9 409.8 L1041.9 409.3 L1041.8 408.7 L1041.7 408.2 L1041.5 407.6 L1041.2 407.1 L1040.9 406.6 L1040.6 406.0 L1040.2 405.5 L1039.7 405.1 L1039.2 404.6 L1038.6 404.2 L1038.0 403.7 L1037.4 403.3 L1036.7 403.0 L1036.0 402.6 L1035.2 402.3 L1034.4 402.0 L1033.6 401.7 L1032.7 401.5 L1031.9 401.3 L1031.0 401.2 L1030.1 401.0 L1029.2 401.0 L1028.3 400.9 L1027.3 400.9 L1026.4 400.9 L1025.5 401.0 L1024.6 401.0 L1023.7 401.2 L1022.9 401.3 L1022.0 401.5 L1021.2 401.7 L1020.4 402.0 L1019.6 402.3 L1018.9 402.6 L1018.2 403.0 L1017.6 403.3 L1017.0 403.7 L1016.4 404.2 L1015.9 404.6 L1015.5 405.1 L1015.1 405.6 L1014.7 406.1 L1014.4 406.6 L1014.2 407.1 L1014.0 407.6 L1013.9 408.2 L1013.8 408.7 L1013.8 409.3 L1013.9 409.8 L1014.0 410.4 L1014.2 410.9 L1014.4 411.5 L1014.7 412.0 L1015.1 412.5 L1015.5 413.0 L1015.9 413.5 L1016.4 414.0 L1017.0 414.4 L1017.6 414.8 L1018.2 415.2 L1018.9 415.6 L1019.7 416.0 L1020.4 416.3 L1021.2 416.6 L1022.1 416.8 L1022.9 417.1 L1023.8 417.3 L1024.7 417.4 L1025.6 417.6 L1026.5 417.6 L1027.4 417.7 L1028.3 417.7 L1029.2 417.7 L1030.2 417.6 L1031.1 417.6 L1032.0 417.4 L1032.8 417.3 L1033.7 417.1 L1034.5 416.8 L1035.3 416.6 L1036.1 416.3 L1036.8 416.0 L1037.5 415.6 L1038.1 415.2 L1038.7 414.8 L1039.3 414.4 L1039.8 414.0 Z" fill="#a85426" stroke="#d06a40" stroke-width="0.6"/><path d="M1029.5 402 L1029 415" stroke="#eeeeee" stroke-width="1" fill="none"/>
<path d="M738.2 606.1 L738.2 609.6 L738.6 613.1 L739.2 616.5 L740.0 620.0 L741.2 623.4 L742.7 626.8 L744.4 630.1 L746.4 633.4 L748.7 636.5 L751.3 639.7 L754.1 642.7 L757.1 645.6 L760.4 648.4 L763.9 651.1 L767.7 653.7 L771.6 656.2 L775.8 658.5 L780.2 660.7 L784.7 662.7 L789.4 664.6 L794.2 666.3 L799.2 667.8 L804.4 669.2 L809.6 670.4 L814.9 671.4 L820.3 672.3 L825.8 672.9 L831.3 673.4 L836.8 673.6 L842.4 673.7 L848.0 673.6 L853.5 673.3 L859.0 672.8 L864.5 672.2 L869.9 671.3 L875.2 670.3 L880.4 669.0 L885.5 667.6 L890.5 666.1 L895.4 664.3 L900.1 662.5 L904.6 660.4 L909.0 658.2 L913.1 655.9 L917.1 653.4 L920.8 650.8 L924.3 648.1 L927.6 645.2 L930.7 642.3 L933.5 639.3 L936.0 636.1 L938.3 632.9 L940.3 629.7 L942.0 626.4 L943.4 623.0 L944.6 619.6 L945.5 616.1 L946.1 612.7 L946.4 609.2 L946.5 605.7 L944.9 679.4 L944.9 682.9 L944.6 686.4 L944.0 689.9 L943.1 693.3 L942.0 696.8 L940.5 700.2 L938.8 703.5 L936.9 706.8 L934.6 710.0 L932.1 713.2 L929.4 716.2 L926.4 719.2 L923.1 722.1 L919.7 724.8 L916.0 727.4 L912.1 729.9 L908.0 732.3 L903.7 734.5 L899.2 736.5 L894.6 738.4 L889.8 740.2 L884.9 741.8 L879.9 743.2 L874.7 744.4 L869.5 745.4 L864.2 746.3 L858.8 747.0 L853.4 747.5 L847.9 747.8 L842.4 747.9 L837.0 747.8 L831.5 747.5 L826.1 747.1 L820.7 746.4 L815.4 745.6 L810.1 744.6 L805.0 743.4 L799.9 742.0 L795.0 740.4 L790.2 738.7 L785.6 736.8 L781.1 734.8 L776.8 732.6 L772.7 730.3 L768.8 727.8 L765.1 725.2 L761.7 722.4 L758.4 719.6 L755.4 716.7 L752.7 713.6 L750.2 710.5 L747.9 707.3 L745.9 704.0 L744.2 700.6 L742.8 697.2 L741.6 693.8 L740.7 690.3 L740.1 686.8 L739.8 683.3 L739.8 679.8 Z" fill="url(#rgw)"/><path d="M857.0 745.3 L869.6 743.6 L869.9 684.1 L857.1 685.8 Z" fill="#aa5627" stroke="#7e3c18" stroke-width="0.9" stroke-opacity="0.75"/><path d="M859.7 686.2 L867.3 685.2" fill="none" stroke="#d99a30" stroke-width="1.2" opacity="0.8"/><path d="M896.3 736.1 L906.8 731.4 L907.6 672.0 L896.9 676.7 Z" fill="#aa5627" stroke="#7e3c18" stroke-width="0.9" stroke-opacity="0.75"/><path d="M899.1 676.5 L905.5 673.6" fill="none" stroke="#d99a30" stroke-width="1.2" opacity="0.8"/><path d="M927.0 717.8 L933.8 710.8 L934.9 651.6 L928.0 658.5 Z" fill="#aa5627" stroke="#7e3c18" stroke-width="0.9" stroke-opacity="0.75"/><path d="M929.4 657.8 L933.5 653.7" fill="none" stroke="#d99a30" stroke-width="1.2" opacity="0.8"/><path d="M944.3 693.4 L946.5 685.3 L947.8 626.2 L945.5 634.2 Z" fill="#aa5627" stroke="#7e3c18" stroke-width="0.9" stroke-opacity="0.75"/><path d="M946.0 633.3 L947.3 628.5" fill="none" stroke="#d99a30" stroke-width="1.2" opacity="0.8"/><path d="M738.2 685.7 L740.4 693.8 L739.1 634.7 L736.9 626.6 Z" fill="#aa5627" stroke="#7e3c18" stroke-width="0.9" stroke-opacity="0.75"/><path d="M737.4 628.9 L738.7 633.7" fill="none" stroke="#d99a30" stroke-width="1.2" opacity="0.8"/><path d="M750.9 711.3 L757.8 718.2 L756.7 658.9 L749.8 652.0 Z" fill="#aa5627" stroke="#7e3c18" stroke-width="0.9" stroke-opacity="0.75"/><path d="M751.2 654.1 L755.4 658.2" fill="none" stroke="#d99a30" stroke-width="1.2" opacity="0.8"/><path d="M778.0 731.7 L788.5 736.4 L787.9 677.0 L777.2 672.3 Z" fill="#aa5627" stroke="#7e3c18" stroke-width="0.9" stroke-opacity="0.75"/><path d="M779.3 673.9 L785.7 676.7" fill="none" stroke="#d99a30" stroke-width="1.2" opacity="0.8"/><path d="M815.3 743.7 L827.9 745.3 L827.7 685.9 L814.9 684.2 Z" fill="#aa5627" stroke="#7e3c18" stroke-width="0.9" stroke-opacity="0.75"/><path d="M817.5 685.3 L825.1 686.3" fill="none" stroke="#d99a30" stroke-width="1.2" opacity="0.8"/><path d="M929.9 643.1 L933.4 639.3 L936.5 635.4 L939.3 631.4 L941.6 627.2 L943.4 623.0 L944.9 618.8 L945.8 614.4 L946.4 610.1 L946.5 605.8 L946.1 601.4 L945.3 597.1 L944.1 592.8 L942.4 588.7 L940.3 584.5 L937.8 580.5 L934.9 576.7 L931.6 572.9 L928.0 569.3 L924.0 565.8 L919.6 562.6 L915.0 559.5 L910.0 556.6 L904.8 553.9 L899.3 551.5 L893.6 549.3 L887.7 547.3 L881.5 545.6 L875.3 544.1 L868.9 542.9 L862.3 542.0 L855.8 541.3 L849.1 540.9 L842.4 540.8 L835.8 540.9 L829.1 541.3 L822.5 542.0 L816.0 543.0 L809.6 544.2 L803.3 545.7 L797.2 547.4 L791.2 549.4 L785.5 551.6 L780.0 554.1 L774.8 556.8 L769.8 559.7 L765.1 562.8 L760.8 566.0 L756.8 569.5 L753.1 573.1 L749.8 576.9 L746.9 580.8 L744.4 584.8 L742.3 588.9 L740.6 593.1 L739.4 597.4 L738.6 601.7 L738.2 606.0 L738.3 610.4 L738.8 614.7 L739.8 619.1 L741.2 623.3 L743.1 627.5 L745.4 631.7 L748.1 635.7 L751.2 639.6 L754.7 643.4 L758.7 647.0 L763.0 650.4 L767.6 653.7 L772.6 656.7 L777.9 659.6 L783.5 662.2 L789.3 664.6 L795.4 666.7 L801.7 668.5 L808.2 670.1 L814.8 671.4 L821.6 672.4 L828.4 673.1 L835.4 673.6 L842.3 673.7 L849.3 673.6 L856.2 673.1 L863.0 672.4 L869.8 671.3 L876.4 670.0 L882.9 668.4 L889.2 666.5 L895.3 664.4 L901.1 662.0 L906.7 659.4 L912.0 656.5 L917.0 653.4 L921.7 650.2 L925.9 646.7 L929.9 643.1 Z" fill="#b42a2c"/><path d="M929.9 643.1 L933.4 639.3 L936.5 635.4 L939.3 631.4 L941.6 627.2 L943.4 623.0 L944.9 618.8 L945.8 614.4 L946.4 610.1 L946.5 605.8 L946.1 601.4 L945.3 597.1 L944.1 592.8 L942.4 588.7 L940.3 584.5 L937.8 580.5 L934.9 576.7 L931.6 572.9 L928.0 569.3 L924.0 565.8 L919.6 562.6 L915.0 559.5 L910.0 556.6 L904.8 553.9 L899.3 551.5 L893.6 549.3 L887.7 547.3 L881.5 545.6 L875.3 544.1 L868.9 542.9 L862.3 542.0 L855.8 541.3 L849.1 540.9 L842.4 540.8 L835.8 540.9 L829.1 541.3 L822.5 542.0 L816.0 543.0 L809.6 544.2 L803.3 545.7 L797.2 547.4 L791.2 549.4 L785.5 551.6 L780.0 554.1 L774.8 556.8 L769.8 559.7 L765.1 562.8 L760.8 566.0 L756.8 569.5 L753.1 573.1 L749.8 576.9 L746.9 580.8 L744.4 584.8 L742.3 588.9 L740.6 593.1 L739.4 597.4 L738.6 601.7 L738.2 606.0 L738.3 610.4 L738.8 614.7 L739.8 619.1 L741.2 623.3 L743.1 627.5 L745.4 631.7 L748.1 635.7 L751.2 639.6 L754.7 643.4 L758.7 647.0 L763.0 650.4 L767.6 653.7 L772.6 656.7 L777.9 659.6 L783.5 662.2 L789.3 664.6 L795.4 666.7 L801.7 668.5 L808.2 670.1 L814.8 671.4 L821.6 672.4 L828.4 673.1 L835.4 673.6 L842.3 673.7 L849.3 673.6 L856.2 673.1 L863.0 672.4 L869.8 671.3 L876.4 670.0 L882.9 668.4 L889.2 666.5 L895.3 664.4 L901.1 662.0 L906.7 659.4 L912.0 656.5 L917.0 653.4 L921.7 650.2 L925.9 646.7 L929.9 643.1 Z" fill="none" stroke="#c86a30" stroke-width="0.9"/><path d="M924.6 640.9 L928.0 637.3 L930.9 633.7 L933.5 629.9 L935.7 626.0 L937.4 622.0 L938.8 618.0 L939.7 613.9 L940.2 609.9 L940.3 605.8 L940.0 601.7 L939.2 597.6 L938.1 593.6 L936.5 589.7 L934.6 585.8 L932.2 582.0 L929.5 578.4 L926.4 574.8 L923.0 571.4 L919.2 568.2 L915.1 565.1 L910.8 562.2 L906.1 559.5 L901.2 557.0 L896.0 554.7 L890.6 552.6 L885.0 550.7 L879.3 549.1 L873.4 547.7 L867.3 546.6 L861.2 545.7 L855.0 545.0 L848.7 544.7 L842.4 544.5 L836.1 544.7 L829.9 545.1 L823.7 545.7 L817.5 546.6 L811.5 547.8 L805.6 549.2 L799.8 550.8 L794.2 552.7 L788.8 554.8 L783.6 557.1 L778.7 559.6 L774.0 562.4 L769.6 565.3 L765.5 568.4 L761.8 571.6 L758.3 575.0 L755.2 578.6 L752.5 582.3 L750.1 586.1 L748.2 589.9 L746.6 593.9 L745.4 597.9 L744.7 602.0 L744.4 606.0 L744.4 610.1 L744.9 614.2 L745.9 618.3 L747.2 622.3 L749.0 626.3 L751.1 630.1 L753.7 633.9 L756.6 637.6 L760.0 641.1 L763.7 644.5 L767.7 647.8 L772.1 650.8 L776.8 653.7 L781.7 656.4 L787.0 658.8 L792.5 661.0 L798.2 663.0 L804.1 664.8 L810.2 666.2 L816.5 667.5 L822.8 668.4 L829.3 669.1 L835.8 669.5 L842.3 669.6 L848.8 669.5 L855.3 669.1 L861.8 668.4 L868.1 667.4 L874.4 666.1 L880.5 664.6 L886.4 662.9 L892.1 660.9 L897.6 658.6 L902.9 656.2 L907.8 653.5 L912.5 650.6 L916.9 647.5 L921.0 644.3 L924.6 640.9 Z" fill="#a55326"/><path d="M939.5 603.7 L938.8 600.7 L937.9 597.7 L936.7 594.8 L935.3 591.9 L933.7 589.0 L931.9 586.2 L929.9 583.5 L927.7 580.8 L925.2 578.2 L922.6 575.7 L919.8 573.3 L916.9 570.9 L913.7 568.7 L910.4 566.5 L906.9 564.5 L903.3 562.6 L899.6 560.8 L895.7 559.1 L891.7 557.5 L887.5 556.1 L883.3 554.8 L879.0 553.6 L874.6 552.5 L870.1 551.6 L865.6 550.8 L861.0 550.2 L856.4 549.7 L851.7 549.4 L847.0 549.1 L842.3 549.1 L837.7 549.2 L833.0 549.4 L828.3 549.8 L823.7 550.3 L819.1 550.9 L814.6 551.7 L810.1 552.6 L805.7 553.7 L801.4 554.9 L797.1 556.2 L793.0 557.7 L789.0 559.3 L785.1 561.0 L781.4 562.8 L777.7 564.7 L774.3 566.8 L771.0 569.0 L767.8 571.2 L764.8 573.6 L762.0 576.0 L759.4 578.5 L757.0 581.1 L754.8 583.8 L752.7 586.6 L750.9 589.4 L749.3 592.3 L748.0 595.2 L746.8 598.1 L745.9 601.1 L745.2 604.1" fill="none" stroke="#8e4214" stroke-width="1.4" opacity="0.5"/><path d="M939.5 605.5 L938.8 602.5 L937.8 599.5 L936.7 596.5 L935.3 593.6 L933.7 590.8 L931.9 588.0 L929.9 585.2 L927.6 582.6 L925.2 580.0 L922.6 577.4 L919.8 575.0 L916.8 572.7 L913.7 570.4 L910.4 568.3 L906.9 566.3 L903.3 564.3 L899.5 562.5 L895.6 560.8 L891.6 559.3 L887.5 557.8 L883.3 556.5 L879.0 555.3 L874.6 554.3 L870.1 553.3 L865.6 552.6 L861.0 551.9 L856.4 551.4 L851.7 551.1 L847.0 550.9 L842.3 550.8 L837.7 550.9 L833.0 551.1 L828.3 551.5 L823.7 552.0 L819.1 552.7 L814.6 553.4 L810.1 554.4 L805.7 555.4 L801.4 556.6 L797.2 558.0 L793.0 559.4 L789.0 561.0 L785.1 562.7 L781.4 564.6 L777.8 566.5 L774.3 568.5 L771.0 570.7 L767.8 573.0 L764.9 575.3 L762.1 577.8 L759.4 580.3 L757.0 582.9 L754.8 585.6 L752.8 588.3 L751.0 591.1 L749.4 594.0 L748.0 596.9 L746.8 599.9 L745.9 602.9 L745.2 605.9" fill="none" stroke="#d8b236" stroke-width="1.1" stroke-dasharray="1.6 2.4" opacity="0.70"/><path d="M939.2 616.7 L938.5 613.7 L937.6 610.7 L936.5 607.7 L935.1 604.8 L933.5 601.9 L931.7 599.1 L929.7 596.4 L927.4 593.7 L925.0 591.1 L922.4 588.6 L919.6 586.2 L916.7 583.8 L913.5 581.6 L910.2 579.4 L906.8 577.4 L903.2 575.5 L899.4 573.6 L895.5 571.9 L891.5 570.4 L887.4 568.9 L883.2 567.6 L878.9 566.4 L874.5 565.4 L870.1 564.5 L865.5 563.7 L861.0 563.1 L856.3 562.6 L851.7 562.2 L847.0 562.0 L842.4 561.9 L837.7 562.0 L833.0 562.2 L828.4 562.6 L823.7 563.1 L819.2 563.8 L814.6 564.6 L810.2 565.5 L805.8 566.6 L801.5 567.8 L797.3 569.1 L793.2 570.6 L789.2 572.1 L785.3 573.9 L781.5 575.7 L777.9 577.6 L774.5 579.7 L771.2 581.8 L768.0 584.1 L765.0 586.5 L762.2 588.9 L759.6 591.4 L757.2 594.0 L755.0 596.7 L753.0 599.5 L751.2 602.3 L749.6 605.2 L748.2 608.1 L747.1 611.0 L746.1 614.0 L745.4 617.1" fill="none" stroke="#8e4214" stroke-width="1.4" opacity="0.5"/><path d="M939.2 618.4 L938.5 615.4 L937.6 612.4 L936.4 609.5 L935.0 606.5 L933.5 603.7 L931.7 600.9 L929.6 598.1 L927.4 595.5 L925.0 592.9 L922.4 590.3 L919.6 587.9 L916.6 585.6 L913.5 583.3 L910.2 581.2 L906.7 579.1 L903.1 577.2 L899.4 575.4 L895.5 573.7 L891.5 572.1 L887.4 570.7 L883.2 569.3 L878.9 568.2 L874.5 567.1 L870.1 566.2 L865.5 565.4 L861.0 564.8 L856.3 564.3 L851.7 563.9 L847.0 563.7 L842.4 563.7 L837.7 563.8 L833.0 564.0 L828.4 564.3 L823.7 564.9 L819.2 565.5 L814.6 566.3 L810.2 567.2 L805.8 568.3 L801.5 569.5 L797.3 570.8 L793.2 572.3 L789.2 573.9 L785.3 575.6 L781.6 577.4 L777.9 579.4 L774.5 581.4 L771.2 583.6 L768.0 585.8 L765.1 588.2 L762.3 590.6 L759.7 593.2 L757.3 595.8 L755.0 598.5 L753.0 601.2 L751.2 604.0 L749.6 606.9 L748.2 609.8 L747.1 612.8 L746.2 615.8 L745.5 618.8" fill="none" stroke="#d8b236" stroke-width="1.1" stroke-dasharray="1.6 2.4" opacity="0.90"/><path d="M939.0 630.6 L938.3 627.5 L937.3 624.6 L936.2 621.6 L934.8 618.7 L933.2 615.8 L931.4 613.0 L929.4 610.3 L927.2 607.6 L924.8 605.0 L922.2 602.5 L919.4 600.0 L916.5 597.7 L913.3 595.4 L910.0 593.3 L906.6 591.2 L903.0 589.3 L899.3 587.5 L895.4 585.8 L891.4 584.2 L887.3 582.8 L883.1 581.4 L878.8 580.3 L874.4 579.2 L870.0 578.3 L865.5 577.5 L860.9 576.9 L856.3 576.4 L851.7 576.0 L847.0 575.8 L842.4 575.8 L837.7 575.8 L833.0 576.1 L828.4 576.4 L823.8 576.9 L819.2 577.6 L814.7 578.4 L810.3 579.3 L805.9 580.4 L801.6 581.6 L797.4 582.9 L793.3 584.4 L789.3 586.0 L785.4 587.7 L781.7 589.5 L778.1 591.5 L774.7 593.5 L771.4 595.7 L768.2 598.0 L765.3 600.3 L762.5 602.8 L759.9 605.3 L757.5 607.9 L755.3 610.6 L753.2 613.4 L751.4 616.2 L749.9 619.1 L748.5 622.0 L747.3 624.9 L746.4 627.9 L745.7 631.0" fill="none" stroke="#8e4214" stroke-width="1.4" opacity="0.5"/><path d="M938.9 632.3 L938.2 629.3 L937.3 626.3 L936.2 623.3 L934.8 620.4 L933.2 617.5 L931.4 614.7 L929.4 612.0 L927.2 609.3 L924.8 606.7 L922.2 604.2 L919.4 601.7 L916.4 599.4 L913.3 597.1 L910.0 595.0 L906.6 593.0 L903.0 591.0 L899.2 589.2 L895.4 587.5 L891.4 585.9 L887.3 584.5 L883.1 583.2 L878.8 582.0 L874.4 580.9 L870.0 580.0 L865.5 579.2 L860.9 578.6 L856.3 578.1 L851.7 577.8 L847.0 577.5 L842.4 577.5 L837.7 577.6 L833.0 577.8 L828.4 578.2 L823.8 578.7 L819.2 579.3 L814.7 580.1 L810.3 581.0 L805.9 582.1 L801.6 583.3 L797.4 584.7 L793.3 586.1 L789.3 587.7 L785.5 589.4 L781.7 591.3 L778.1 593.2 L774.7 595.3 L771.4 597.4 L768.3 599.7 L765.3 602.0 L762.5 604.5 L759.9 607.0 L757.5 609.6 L755.3 612.3 L753.3 615.1 L751.5 617.9 L749.9 620.8 L748.5 623.7 L747.4 626.7 L746.4 629.7 L745.7 632.7" fill="none" stroke="#d8b236" stroke-width="1.1" stroke-dasharray="1.6 2.4" opacity="0.90"/><g clip-path="url(#ringclip)"><g clip-path="url(#ringclip2)"><rect x="700" y="580" width="260" height="120" fill="#414342"/><path d="M-45.8 610.9 L622.7 103.7 M-47.4 572.3 L885.1 1014.3 M-13.0 626.6 L652.9 115.0 M-17.0 549.5 L912.0 985.0 M20.0 642.4 L683.3 126.3 M13.0 527.1 L938.4 956.2 M53.3 658.4 L714.0 137.7 M42.5 505.0 L964.5 927.8 M120.9 690.8 L776.1 160.8 M100.3 461.6 L1015.3 872.4 M155.1 707.2 L807.5 172.5 M128.6 440.4 L1040.2 845.3 M189.7 723.8 L839.2 184.3 M156.6 419.5 L1064.7 818.7 M224.7 740.6 L871.1 196.2 M184.1 398.8 L1088.7 792.4 M295.6 774.5 L935.7 220.2 M238.1 358.3 L1135.9 741.1 M331.5 791.8 L968.5 232.4 M264.6 338.5 L1158.9 716.0 M367.8 809.2 L1001.4 244.7 M290.7 318.9 L1181.6 691.3 M404.5 826.8 L1034.7 257.1 M316.5 299.6 L1203.9 666.9 M478.9 862.4 L1102.0 282.1 M367.1 261.7 L1247.7 619.3 M516.7 880.5 L1136.1 294.8 M391.9 243.1 L1269.1 596.0 M554.8 898.8 L1170.4 307.6 M416.4 224.8 L1290.2 573.0 M593.4 917.3 L1205.1 320.5 M440.5 206.7 L1311.0 550.3 M671.6 954.8 L1275.3 346.6 M488.0 171.1 L1351.8 505.9 M711.3 973.9 L1310.8 359.8 M511.2 153.7 L1371.7 484.2 M751.5 993.1 L1346.7 373.2 M534.2 136.4 L1391.4 462.8 M792.0 1012.5 L1382.8 386.6 M557.0 119.4 L1410.8 441.6" fill="none" stroke="#8e938f" stroke-width="1.0"/><path d="M86.9 674.5 L744.9 149.2 M71.6 483.2 L990.1 899.9 M260.0 757.5 L903.3 208.2 M211.3 378.5 L1112.5 766.6 M441.5 844.5 L1068.2 269.5 M342.0 280.5 L1226.0 642.9 M632.3 936.0 L1240.0 333.5 M464.4 188.8 L1331.5 528.0 M833.0 1032.2 L1419.3 400.2 M579.4 102.6 L1429.9 420.8" fill="none" stroke="#8e938f" stroke-width="2"/><path d="M-173.3 666.7 L-78.2 595.4 L857.8 1044.0 L1429.9 420.8 L1431.7 418.2 L1432.6 415.4 L1432.5 412.5 L1431.5 409.6 L1429.6 406.8 L1426.8 404.2 L1423.3 402.0 L1419.3 400.2 L610.7 99.3 L606.9 98.2 L602.8 97.5 L598.4 97.2 L594.1 97.5 L589.8 98.2 L585.9 99.3 L582.3 100.8 L579.4 102.6 L-173.3 666.7" fill="none" stroke="#8e938f" stroke-width="1.3"/></g></g><path d="M818.5 736.7 L818.2 684.5 L824.0 671.8" fill="none" stroke="#e6e6e6" stroke-width="1"/>

<path d="M1049 352 Q1050 343 1058 343 L1083 351 Q1090 355 1088 366 L1086 378 L1075 383 L1050 371 Z" fill="#a95527"/>
<path d="M1049 352 L1074 360 L1088 356" fill="none" stroke="#c87030" stroke-width="1"/>
<path d="M1074 360 L1075 383 L1086 378 L1088 356 Z" fill="#934820"/>
<path d="M1049 352 L1050 371" stroke="#e8e8e8" stroke-width="1" fill="none"/>
<path d="M948 380 Q950 372 958 372 L964 374 Q972 378 971 390 L969 414 L949 405 Z" fill="#a95527"/>
<path d="M958 385 Q952 392 958 398" fill="none" stroke="#eeeeee" stroke-width="1"/>
<path d="M969 390 L970 414" stroke="#e8e8e8" stroke-width="1" fill="none"/>
<path d="M1046 425 Q1048 418 1056 418 L1079 423 Q1086 427 1085 436 L1084 449 L1061 456 L1047 444 Z" fill="#a95527"/>
<path d="M1061 431 L1061 456 L1084 449 L1085 428 Z" fill="#934820"/>

<ellipse cx="912.4" cy="1032.8" rx="14.8" ry="8.8" transform="rotate(-40 912.4 1032.8)" fill="none" stroke="#00b043" stroke-width="6.6"/>
<polygon points="932.8,1038.1 935.8,1033.5 950.4,1032.6 956.8,1036.2 934.9,1061.1 927.3,1057.8 942.5,1038.3" fill="#00b043"/></svg>
<div id="lg"><div class="row" style="top:0px"><i style="background:#7458d0"></i><span class="n">Bottom surface</span><span class="t">4m12s</span><span class="p">4.8%</span><span class="d">0.41 m</span></div><div class="row" style="top:22px"><i style="background:#4a7fc0"></i><span class="n">Bridge</span><span class="t">7m3s</span><span class="p">8.1%</span><span class="d">1.03 m</span></div><div class="row" style="top:44px"><i style="background:#ffffff"></i><span class="n">Gap infill</span><span class="t">2m10s</span><span class="p">2.5%</span><span class="d">0.35 m</span></div><div class="row" style="top:66px"><i style="background:#55cc8a"></i><span class="n">Custom</span><span class="t">6m57s</span><span class="p">8.0%</span><span class="d">0.11 m</span></div><div class="row" style="top:88px"><i style="background:#3540a0"></i><span class="n">Travel</span><span class="t">11m4s</span><span class="p">12.7%</span><span class="d"></span></div><div class="row" style="top:110px"><i style="background:#d422d4"></i><span class="n">Retract</span><span class="t"></span><span class="p"></span><span class="d"></span></div><div class="row" style="top:132px"><i style="background:#40b0d8"></i><span class="n">Unretract</span><span class="t"></span><span class="p"></span><span class="d"></span></div><div class="row" style="top:154px"><i style="background:#ffff00"></i><span class="n">Wipe</span><span class="t"></span><span class="p"></span><span class="d"></span></div><div class="row" style="top:176px"><i style="background:#e0e0e0"></i><span class="n">Seams</span><span class="t"></span><span class="p"></span><span class="d"></span></div><div class="row2" style="top:232px"><span class="a">Total Filament:</span><span class="b">15.23 m</span><span class="c">46.15 g</span></div><div class="row2" style="top:252px"><span class="a">Model Filament:</span><span class="b">15.23 m</span><span class="c">46.15 g</span></div><div class="row2" style="top:272px"><span class="a">Cost:</span><span class="b">1.15</span><span class="c"></span></div><div class="row2" style="top:292px"><span class="a">Prepare time:</span><span class="b">6m41s</span><span class="c"></span></div><div class="row2" style="top:312px"><span class="a">Model printing time:</span><span class="b">1h21m</span><span class="c"></span></div><div class="row2" style="top:332px"><span class="a">Total time:</span><span class="b">1h27m</span><span class="c"></span></div><div id="te">Total Estimation</div><div id="sep"></div></div>
</body></html>
